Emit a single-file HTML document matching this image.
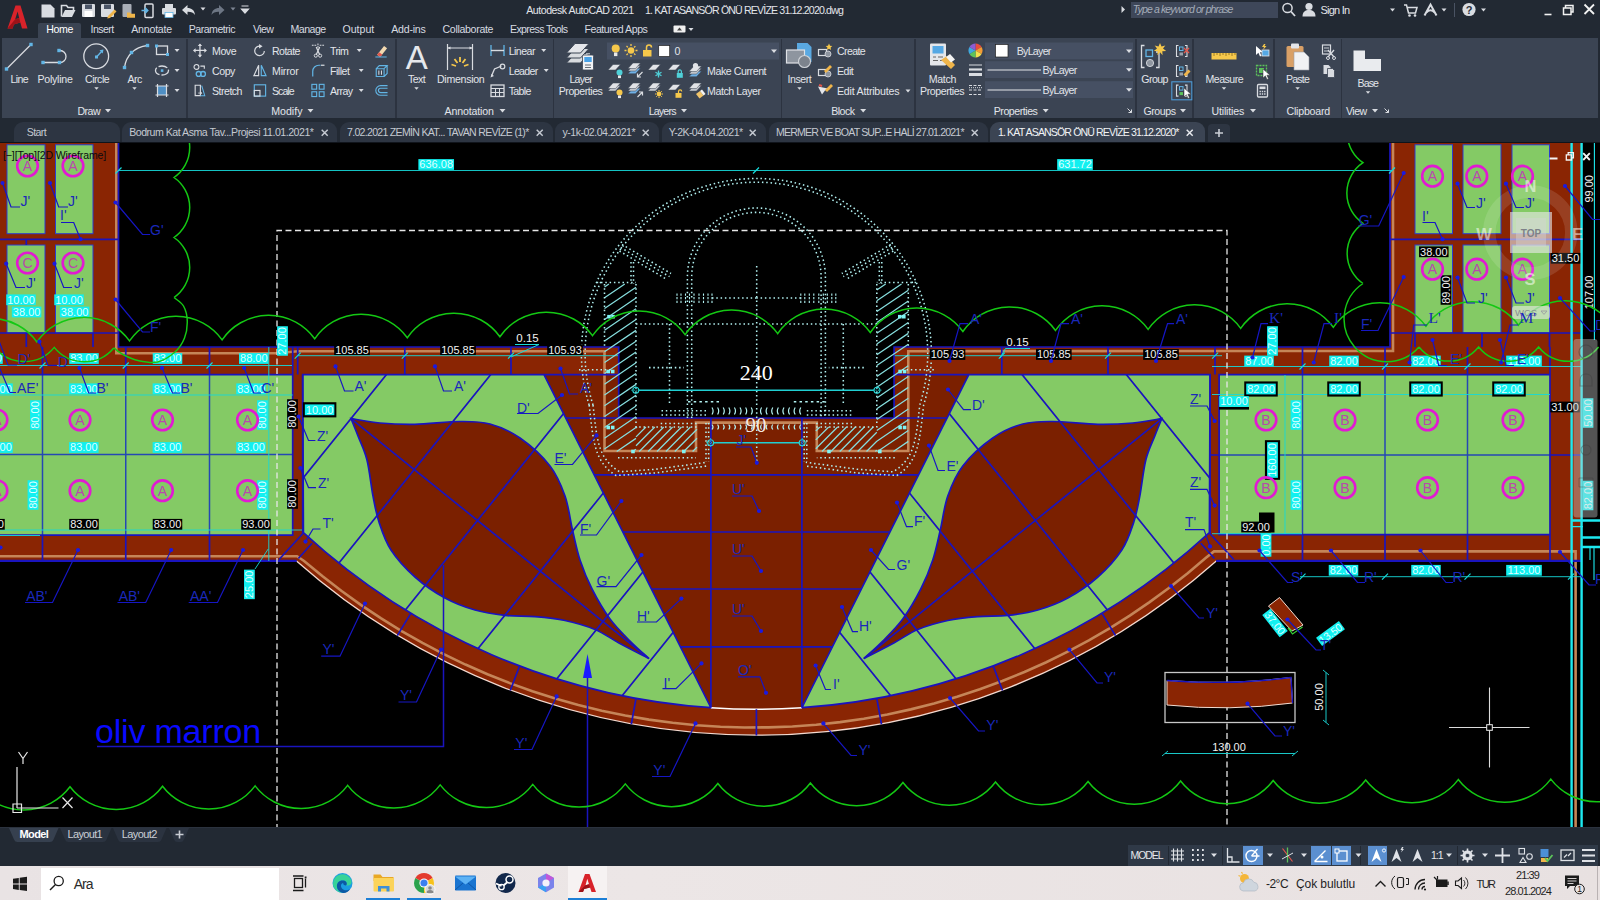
<!DOCTYPE html>
<html lang="tr"><head><meta charset="utf-8"><title>Autodesk AutoCAD 2021</title>
<style>
html,body{margin:0;padding:0;background:#000;}
body{width:1600px;height:900px;overflow:hidden;position:relative;font-family:"Liberation Sans",sans-serif;}
#app{position:absolute;left:0;top:0;width:1600px;height:900px;overflow:hidden;background:#222933;}
.abs{position:absolute;}
svg text{font-family:"Liberation Sans",sans-serif;}

.t{position:absolute;white-space:nowrap;line-height:16px;height:16px;font-family:"Liberation Sans",sans-serif;}
.r{position:absolute;}
.ico{position:absolute;overflow:visible;}
</style></head>
<body><div id="app">
<svg width="1600" height="900" viewBox="0 0 1600 900" style="position:absolute;left:0;top:0">
<defs><clipPath id="vp"><rect x="0" y="143" width="1600" height="684"/></clipPath></defs>
<rect x="0" y="143" width="1600" height="684" fill="#000"/>
<g clip-path="url(#vp)">
<path d="M0,347 L618.7,347 L618.7,418 L894.1,418 L894.1,347 L1581.5,347 L1581.5,561 L1216.3,561 A694.5,694.5 0 0 1 296.5,561 L0,561 Z" fill="#8a2503"/>
<rect x="0" y="143" width="118" height="206" fill="#8a2503"/>
<rect x="1390" y="143" width="191.5" height="206" fill="#8a2503"/>
<path d="M544,374.6 L618.7,374.6 L618.7,418 L894.1,418 L894.1,374.6 L968.8,374.6 L801.9,707.7 A668.7,668.7 0 0 1 710.9,707.7 Z" fill="#7b2000"/>
<defs><clipPath id="cgl"><path d="M302.7,374.6 L544,374.6 L710.9,707.7 A668.7,668.7 0 0 1 303.4,532.6 Z"/></clipPath><clipPath id="cgr"><path d="M1210.1,374.6 L968.8,374.6 L801.9,707.7 A668.7,668.7 0 0 0 1209.4,532.6 Z"/></clipPath></defs>
<path d="M302.7,374.6 L544,374.6 L710.9,707.7 A668.7,668.7 0 0 1 303.4,532.6 Z" fill="#84ca65" stroke="#1a14be" stroke-width="1.7"/>
<path d="M1210.1,374.6 L968.8,374.6 L801.9,707.7 A668.7,668.7 0 0 0 1209.4,532.6 Z" fill="#84ca65" stroke="#1a14be" stroke-width="1.7"/>
<path d="M351,418.6 C355.83,419.33 369.33,422.05 380,423 C390.67,423.95 401.67,424.55 415,424.3 C428.33,424.05 447.5,421.55 460,421.5 C472.5,421.45 480,421.25 490,424 C500,426.75 510,431 520,438 C530,445 542.5,456.33 550,466 C557.5,475.67 561.25,485.33 565,496 C568.75,506.67 570,519.33 572.5,530 C575,540.67 576.75,550.17 580,560 C583.25,569.83 587,579.17 592,589 C597,598.83 603.67,610.33 610,619 C616.33,627.67 623.5,634.4 630,641 C636.5,647.6 645.83,655.67 649,658.6 L649,658.6 C644,656 628,647.85 619,643 C610,638.15 604,633.25 595,629.5 C586,625.75 575,622.65 565,620.5 C555,618.35 545,617.45 535,616.6 C525,615.75 515,616.5 505,615.4 C495,614.3 485,612.9 475,610 C465,607.1 455,603.5 445,598 C435,592.5 424,585 415,577 C406,569 397,559.17 391,550 C385,540.83 382,531 379,522 C376,513 375,506.33 373,496 C371,485.67 369.5,470 367,460 C364.5,450 360.67,442.9 358,436 C355.33,429.1 352.17,421.5 351,418.6 Z" fill="#7b2000" stroke="#1a14be" stroke-width="1.7"/>
<g transform="translate(1512.8,0) scale(-1,1)"><path d="M351,418.6 C355.83,419.33 369.33,422.05 380,423 C390.67,423.95 401.67,424.55 415,424.3 C428.33,424.05 447.5,421.55 460,421.5 C472.5,421.45 480,421.25 490,424 C500,426.75 510,431 520,438 C530,445 542.5,456.33 550,466 C557.5,475.67 561.25,485.33 565,496 C568.75,506.67 570,519.33 572.5,530 C575,540.67 576.75,550.17 580,560 C583.25,569.83 587,579.17 592,589 C597,598.83 603.67,610.33 610,619 C616.33,627.67 623.5,634.4 630,641 C636.5,647.6 645.83,655.67 649,658.6 L649,658.6 C644,656 628,647.85 619,643 C610,638.15 604,633.25 595,629.5 C586,625.75 575,622.65 565,620.5 C555,618.35 545,617.45 535,616.6 C525,615.75 515,616.5 505,615.4 C495,614.3 485,612.9 475,610 C465,607.1 455,603.5 445,598 C435,592.5 424,585 415,577 C406,569 397,559.17 391,550 C385,540.83 382,531 379,522 C376,513 375,506.33 373,496 C371,485.67 369.5,470 367,460 C364.5,450 360.67,442.9 358,436 C355.33,429.1 352.17,421.5 351,418.6 Z" fill="#7b2000" stroke="#1a14be" stroke-width="1.7"/></g>
<path clip-path="url(#cgl)" d="M601.9,107.07 L100.1,730.13 M665.14,158 L163.34,781.06 M728.38,208.93 L226.58,831.99 M791.31,259.62 L289.51,882.68 M853.85,309.98 L352.05,933.04 M901.74,348.56 L399.95,971.62 M351,418.6 L649,658.6" fill="none" stroke="#1a14be" stroke-width="1.7"/>
<g transform="translate(1512.8,0) scale(-1,1)"><path clip-path="url(#cgl)" d="M601.9,107.07 L100.1,730.13 M665.14,158 L163.34,781.06 M728.38,208.93 L226.58,831.99 M791.31,259.62 L289.51,882.68 M853.85,309.98 L352.05,933.04 M901.74,348.56 L399.95,971.62 M351,418.6 L649,658.6" fill="none" stroke="#1a14be" stroke-width="1.7"/></g>
<rect x="0" y="374.6" width="292.7" height="160.6" fill="#84ca65"/>
<rect x="1220" y="374.6" width="330" height="160" fill="#84ca65"/>
<rect x="7" y="144.8" width="38" height="88.9" fill="#84ca65" stroke="#2a3cd0" stroke-width="1"/>
<rect x="7" y="245" width="38" height="88" fill="#84ca65" stroke="#2a3cd0" stroke-width="1"/>
<rect x="55.5" y="144.8" width="37.5" height="88.9" fill="#84ca65" stroke="#2a3cd0" stroke-width="1"/>
<rect x="55.5" y="245" width="37.5" height="88" fill="#84ca65" stroke="#2a3cd0" stroke-width="1"/>
<rect x="1415" y="144.8" width="37.5" height="88.9" fill="#84ca65" stroke="#2a3cd0" stroke-width="1"/>
<rect x="1415" y="245" width="37.5" height="88" fill="#84ca65" stroke="#2a3cd0" stroke-width="1"/>
<rect x="1463" y="144.8" width="38" height="88.9" fill="#84ca65" stroke="#2a3cd0" stroke-width="1"/>
<rect x="1463" y="245" width="38" height="88" fill="#84ca65" stroke="#2a3cd0" stroke-width="1"/>
<rect x="1512" y="144.8" width="37.5" height="88.9" fill="#84ca65" stroke="#2a3cd0" stroke-width="1"/>
<rect x="1512" y="245" width="37.5" height="88" fill="#84ca65" stroke="#2a3cd0" stroke-width="1"/>
<path d="M116.3,140 L116.3,353.2 L276,353.2 L298,351.2 L604.5,351.2 L604.5,451 L696,451 L696,422.6 L816.8,422.6 L816.8,451 L908.3,451 L908.3,351.2 L1393,350.9 L1393,140 M0,556.2 L297,556.2 L304.07,560.95 L322.58,576.32 L341.62,591.03 L361.15,605.07 L381.16,618.42 L401.62,631.05 L422.5,642.97 L443.79,654.14 L465.44,664.56 L487.44,674.22 L509.77,683.1 L532.38,691.2 L555.26,698.5 L578.37,705 L601.7,710.69 L625.2,715.56 L648.86,719.6 L672.63,722.82 L696.51,725.2 L720.44,726.75 L744.41,727.46 L768.39,727.35 L792.34,726.44 L816.25,724.68 L840.08,722.1 L863.8,718.68 L887.38,714.44 L910.8,709.38 L934.02,703.5 L957.03,696.82 L979.78,689.34 L1002.25,681.07 L1024.43,672.03 L1046.26,662.21 L1067.74,651.65 L1088.84,640.34 L1109.53,628.3 L1129.78,615.55 L1149.57,602.1 L1168.87,587.97 L1187.67,573.18 L1205.95,557.74 L1214,551.4 L1575.6,551.4 L1575.6,830" fill="none" stroke="#c58558" stroke-width="2.6" stroke-linejoin="miter"/>
<path d="M296.5,561 A694.5,694.5 0 0 0 1216.3,561" fill="none" stroke="#f3d9cf" stroke-width="1.3"/>
<path d="M710.9,707.7 A668.7,668.7 0 0 0 801.9,707.7" fill="none" stroke="#fff" stroke-width="1.6"/>
<path d="M42.5,374.6 L42.5,535.2 M125.75,374.6 L125.75,535.2 M209.5,374.6 L209.5,535.2 M0,454.5 L292.7,454.5 M1302.5,374.6 L1302.5,534.7 M1385,374.6 L1385,534.7 M1467.5,374.6 L1467.5,534.7 M1219.1,455 L1550,455" fill="none" stroke="#2448b4" stroke-width="1.5"/>
<path d="M118.5,140 L118.5,347 L618.7,347 L618.7,418 L894.1,418 L894.1,347 L1390,347 L1390,140 M0,560.8 L296.5,560.8 M1216.3,560.8 L1581,560.8 L1581,546 M0,374.6 L292.7,374.6 L292.7,535.2 L0,535.2 M302.7,374.6 L302.7,533 M1219.1,374.6 L1550,374.6 L1550,534.7 L1219.1,534.7 Z M1210.1,374.6 L1210.1,533 M292.7,347 L292.7,374.6 M297.7,347 L297.7,374.6 M1215,347 L1215,374.6 M42.5,347 L42.5,374.6 M42.5,535.2 L42.5,561 M125.75,347 L125.75,374.6 M125.75,535.2 L125.75,561 M209.5,347 L209.5,374.6 M209.5,535.2 L209.5,561 M1302.5,347 L1302.5,374.6 M1302.5,534.7 L1302.5,561 M1385,347 L1385,374.6 M1385,534.7 L1385,561 M1467.5,347 L1467.5,374.6 M1467.5,534.7 L1467.5,561 M1209.8,455 L1219.1,455 M1550,455 L1581,455 M1550,347 L1550,561 M404.8,347 L404.8,374.6 M1108,347 L1108,374.6 M511,347 L511,374.6 M1001.8,347 L1001.8,374.6 M544,374.6 L618.7,374.6 M968.8,374.6 L894.1,374.6 M710.9,418 L710.9,707.7 M801.9,418 L801.9,707.7 M565.75,418 L947.05,418 M594.21,474.8 L918.59,474.8 M622.87,532 L889.93,532 M651.43,589 L861.37,589 M680.39,646.8 L832.41,646.8 M410.89,613.13 L397.31,635.64 M519.59,665.97 L510.28,690.56 M636.03,698.38 L631.3,724.25 M756.4,709.3 L756.4,735.6 M876.77,698.38 L881.5,724.25 M993.21,665.97 L1002.52,690.56 M1101.91,613.13 L1115.49,635.64 M303.4,533 L279,559.5 M312,543.3 L298.4,558.5 M1209.4,533 L1233.8,559.5 M1200.8,543.3 L1214.4,558.5 M0,239.3 L118.5,239.3 M26.3,239.3 L26.3,245 M26.3,333 L26.3,347 M93,333 L93,347 M0,333 L118,333 M1390,239.3 L1581,239.3 M1390,333 L1581,333 M1482,333 L1482,347 M1415,333 L1415,347 M1549.5,333 L1549.5,347" fill="none" stroke="#1a14be" stroke-width="1.7"/>
<path d="M0,560.8 L296.5,560.8 M1216.3,560.8 L1581,560.8" fill="none" stroke="#1a14be" stroke-width="2.2"/>
<path d="M118.5,170.5 L1392,170.5 M0,395 L292.7,395 M0,530 L302,530 M268.8,347 L268.8,561 M0,365.5 L292,365.5 M1212,394.5 L1550,394.5 M1212,533.7 L1302,533.7 M1285,375 L1285,534 M1212,366.5 L1581,366.5 M297.7,355.7 L618,355.7 M894.8,355.7 L1222,355.7 M1300,576.7 L1581,576.7 M0,535.5 L40,535.5 M268.2,549 L255,569" fill="none" stroke="#16d8d8" stroke-width="1" opacity="0.9"/>
<path d="M115.5,173.5 L121.5,167.5 M753,173.5 L759,167.5 M1389,173.5 L1395,167.5 M294.7,358.7 L300.7,352.7 M401.8,358.7 L407.8,352.7 M508,358.7 L514,352.7 M1105,358.7 L1111,352.7 M998.8,358.7 L1004.8,352.7 M1212.1,358.7 L1218.1,352.7 M39.5,368.5 L45.5,362.5 M122.7,368.5 L128.7,362.5 M206.5,368.5 L212.5,362.5 M1299.5,369.5 L1305.5,363.5 M1382,369.5 L1388,363.5 M1464.5,369.5 L1470.5,363.5 M1299.5,579.7 L1305.5,573.7 M1382,579.7 L1388,573.7 M1464.5,579.7 L1470.5,573.7 M1568,579.7 L1574,573.7" fill="none" stroke="#16d8d8" stroke-width="1.2"/>
<path d="M1571.6,140 L1571.6,830 M1581.6,140 L1581.6,830" fill="none" stroke="#1de9f0" stroke-width="2.4"/>
<path d="M1594.4,140 L1594.4,340" fill="none" stroke="#1de9f0" stroke-width="1.1"/>
<path d="M1571,520.5 L1600,520.5 M1581,537.5 L1600,537.5 M1581,547 L1600,547" fill="none" stroke="#1de9f0" stroke-width="2.4"/>
<path d="M1571,526.6 L1583,526.6 M1590,547 L1590,560 M1594,547 L1594,580" fill="none" stroke="#1de9f0" stroke-width="1.1"/>
<path d="M277,830 L277,230.5 L1227,230.5 L1227,830" fill="none" stroke="#e6e6e6" stroke-width="1.3" stroke-dasharray="6 3.5"/>
<path d="M97,746.5 L443.5,746.5 L443.5,565" fill="none" stroke="#1a14be" stroke-width="1.5"/>
<path d="M587.5,830 L587.5,676" fill="none" stroke="#1a14be" stroke-width="1.5"/>
<path d="M587.5,654 L592,678 L583,678 Z" fill="#1a1aff"/>
<path d="M604.5,287 L608.91,284 M604.5,297.8 L624.79,284 M604.5,308.6 L636,287.18 M604.5,319.4 L636,297.98 M604.5,330.2 L636,308.78 M604.5,341 L636,319.58 M604.5,351.8 L636,330.38 M604.5,362.6 L636,341.18 M604.5,373.4 L636,351.98 M604.5,384.2 L636,362.78 M604.5,395 L636,373.58 M604.5,405.8 L636,384.38 M604.5,416.6 L636,395.18 M604.5,427.4 L636,405.98 M604.5,438.2 L636,416.78 M604.5,449 L636,427.58 M616.71,451.5 L636,438.38 M632.59,451.5 L636,449.18 M636,428 L637,427 M636,436.9 L645.9,427 M636,445.8 L654.8,427 M639.2,451.5 L663.7,427 M648.1,451.5 L672.6,427 M657,451.5 L681.5,427 M665.9,451.5 L690.4,427 M674.8,451.5 L697,429.3 M683.7,451.5 L697,438.2 M692.6,451.5 L697,447.1 M876.8,290 L885.62,284 M876.8,300.8 L901.51,284 M876.8,311.6 L908.3,290.18 M876.8,322.4 L908.3,300.98 M876.8,333.2 L908.3,311.78 M876.8,344 L908.3,322.58 M876.8,354.8 L908.3,333.38 M876.8,365.6 L908.3,344.18 M876.8,376.4 L908.3,354.98 M876.8,387.2 L908.3,365.78 M876.8,398 L908.3,376.58 M876.8,408.8 L908.3,387.38 M876.8,419.6 L908.3,398.18 M876.8,430.4 L908.3,408.98 M876.8,441.2 L908.3,419.78 M877.54,451.5 L908.3,430.58 M893.42,451.5 L908.3,441.38 M815.8,431 L819.8,427 M815.8,439.9 L828.7,427 M815.8,448.8 L837.6,427 M822,451.5 L846.5,427 M830.9,451.5 L855.4,427 M839.8,451.5 L864.3,427 M848.7,451.5 L873.2,427 M857.6,451.5 L876.8,432.3 M866.5,451.5 L876.8,441.2 M875.4,451.5 L876.8,450.1" fill="none" stroke="#86dede" stroke-width="1.25"/>
<g><path d="M636,284 L636,427 L697,427 M596.7,282.4 L636,282.4 M604.5,284 L604.5,347 M636,324 L756.4,324 M669.5,324 L669.5,404 M649,367.6 L684,367.6 M661.5,410.7 L707,410.7 M661.5,415 L707,415 M660.7,423.5 L697,423.5 M706,423 L706,462 M708.6,423 L708.6,462 M579,369.8 L611,369.8 M618,457.8 L696,457.8 M712,298 L756.4,298 M620.7,247.5 L669.5,276.7 M619.5,251 L667,279.6 M622,244.5 L671,273.5 M631,262 L631,284 M633.5,262 L633.5,284" fill="none" stroke="#b2f2f2" stroke-width="1.55" stroke-dasharray="1.5 2.8"/>
<path d="M677,293.5 L677,303 M681,293.5 L681,303 M685.5,293.5 L685.5,303 M689.5,293.5 L689.5,303 M694,293.5 L694,303 M699,293.5 L699,303 M703.5,293.5 L703.5,303 M708,293.5 L708,303 M712,293.5 L712,303" fill="none" stroke="#b2f2f2" stroke-width="1.1" stroke-dasharray="2.2 1.4"/>
<path d="M712,407.5 q2.2,3.5 0,7 M712,424.5 q2,2.5 0,5 M717.6,407.5 q2.2,3.5 0,7 M717.6,424.5 q2,2.5 0,5 M723.2,407.5 q2.2,3.5 0,7 M723.2,424.5 q2,2.5 0,5 M728.8,407.5 q2.2,3.5 0,7 M728.8,424.5 q2,2.5 0,5 M734.4,407.5 q2.2,3.5 0,7 M734.4,424.5 q2,2.5 0,5 M740,407.5 q2.2,3.5 0,7 M740,424.5 q2,2.5 0,5 M745.6,407.5 q2.2,3.5 0,7 M745.6,424.5 q2,2.5 0,5 M751.2,407.5 q2.2,3.5 0,7 M751.2,424.5 q2,2.5 0,5" fill="none" stroke="#b2f2f2" stroke-width="1.2"/>
<path d="M688,401.8 L722,401.8" fill="none" stroke="#b2f2f2" stroke-width="1.4" stroke-dasharray="2.5 3.2"/>
<rect x="606.4" y="369.7" width="3.6" height="3.6" fill="#7ff4f4"/>
<rect x="610.9" y="369.7" width="3.6" height="3.6" fill="#7ff4f4"/>
<rect x="606.4" y="425.7" width="3.6" height="3.6" fill="#7ff4f4"/>
<rect x="610.9" y="425.7" width="3.6" height="3.6" fill="#7ff4f4"/>
<rect x="631.2" y="449.7" width="3.6" height="3.6" fill="#7ff4f4"/>
<rect x="682" y="449.7" width="3.6" height="3.6" fill="#7ff4f4"/>
<rect x="607.2" y="314.9" width="3.6" height="3.6" fill="#7ff4f4"/>
<rect x="611.2" y="314.9" width="3.6" height="3.6" fill="#7ff4f4"/>
<circle cx="635.8" cy="390.2" r="3" fill="none" stroke="#27d6d6" stroke-width="1.1"/>
<path d="M631.3,390.2 h9 M635.8,385.7 v9" stroke="#27d6d6" stroke-width="0.9" stroke-dasharray="1 1.5" fill="none"/>
<circle cx="710.6" cy="442.7" r="3" fill="none" stroke="#27d6d6" stroke-width="1.1"/>
<path d="M706.1,442.7 h9 M710.6,438.2 v9" stroke="#27d6d6" stroke-width="0.9" stroke-dasharray="1 1.5" fill="none"/></g>
<g transform="translate(1512.8,0) scale(-1,1)"><path d="M636,284 L636,427 L697,427 M596.7,282.4 L636,282.4 M604.5,284 L604.5,347 M636,324 L756.4,324 M669.5,324 L669.5,404 M649,367.6 L684,367.6 M661.5,410.7 L707,410.7 M661.5,415 L707,415 M660.7,423.5 L697,423.5 M706,423 L706,462 M708.6,423 L708.6,462 M579,369.8 L611,369.8 M618,457.8 L696,457.8 M712,298 L756.4,298 M620.7,247.5 L669.5,276.7 M619.5,251 L667,279.6 M622,244.5 L671,273.5 M631,262 L631,284 M633.5,262 L633.5,284" fill="none" stroke="#b2f2f2" stroke-width="1.55" stroke-dasharray="1.5 2.8"/>
<path d="M677,293.5 L677,303 M681,293.5 L681,303 M685.5,293.5 L685.5,303 M689.5,293.5 L689.5,303 M694,293.5 L694,303 M699,293.5 L699,303 M703.5,293.5 L703.5,303 M708,293.5 L708,303 M712,293.5 L712,303" fill="none" stroke="#b2f2f2" stroke-width="1.1" stroke-dasharray="2.2 1.4"/>
<path d="M712,407.5 q2.2,3.5 0,7 M712,424.5 q2,2.5 0,5 M717.6,407.5 q2.2,3.5 0,7 M717.6,424.5 q2,2.5 0,5 M723.2,407.5 q2.2,3.5 0,7 M723.2,424.5 q2,2.5 0,5 M728.8,407.5 q2.2,3.5 0,7 M728.8,424.5 q2,2.5 0,5 M734.4,407.5 q2.2,3.5 0,7 M734.4,424.5 q2,2.5 0,5 M740,407.5 q2.2,3.5 0,7 M740,424.5 q2,2.5 0,5 M745.6,407.5 q2.2,3.5 0,7 M745.6,424.5 q2,2.5 0,5 M751.2,407.5 q2.2,3.5 0,7 M751.2,424.5 q2,2.5 0,5" fill="none" stroke="#b2f2f2" stroke-width="1.2"/>
<path d="M688,401.8 L722,401.8" fill="none" stroke="#b2f2f2" stroke-width="1.4" stroke-dasharray="2.5 3.2"/>
<rect x="606.4" y="369.7" width="3.6" height="3.6" fill="#7ff4f4"/>
<rect x="610.9" y="369.7" width="3.6" height="3.6" fill="#7ff4f4"/>
<rect x="606.4" y="425.7" width="3.6" height="3.6" fill="#7ff4f4"/>
<rect x="610.9" y="425.7" width="3.6" height="3.6" fill="#7ff4f4"/>
<rect x="631.2" y="449.7" width="3.6" height="3.6" fill="#7ff4f4"/>
<rect x="682" y="449.7" width="3.6" height="3.6" fill="#7ff4f4"/>
<rect x="607.2" y="314.9" width="3.6" height="3.6" fill="#7ff4f4"/>
<rect x="611.2" y="314.9" width="3.6" height="3.6" fill="#7ff4f4"/>
<circle cx="635.8" cy="390.2" r="3" fill="none" stroke="#27d6d6" stroke-width="1.1"/>
<path d="M631.3,390.2 h9 M635.8,385.7 v9" stroke="#27d6d6" stroke-width="0.9" stroke-dasharray="1 1.5" fill="none"/>
<circle cx="710.6" cy="442.7" r="3" fill="none" stroke="#27d6d6" stroke-width="1.1"/>
<path d="M706.1,442.7 h9 M710.6,438.2 v9" stroke="#27d6d6" stroke-width="0.9" stroke-dasharray="1 1.5" fill="none"/></g>
<path d="M589.15,405 A175,175 0 1 1 923.65,405 C919.65,440 918.8,462 896.8,475.5 L857.8,473 L805.8,466 M589.15,405 C593.15,440 594,462 616,475.5 L655,473 L707,466 M593.02,405 A171.3,171.3 0 1 1 919.78,405 C915.78,440 915.1,458.3 893.1,471.8 L857.8,469.3 L805.8,462.3 M593.02,405 C597.02,440 597.7,458.3 619.7,471.8 L655,469.3 L707,462.3 M687.4,418 L687.4,277 A69,69 0 0 1 825.4,277 L825.4,418 M691.7,418 L691.7,277 A64.7,64.7 0 0 1 821.1,277 L821.1,418 M756.7,266 L756.7,462" fill="none" stroke="#b2f2f2" stroke-width="1.55" stroke-dasharray="1.5 2.8"/>
<path d="M639,390.2 L873.8,390.2 M713.6,442.7 L799.2,442.7" fill="none" stroke="#20cfd2" stroke-width="1.5"/>
<text x="756.2" y="379.8" font-size="22" text-anchor="middle" fill="#fff" style="font-family:'Liberation Serif',serif">240</text>
<text x="756" y="432.2" font-size="21" text-anchor="middle" fill="#f4e9e4" style="font-family:'Liberation Serif',serif">90</text>
<g transform="translate(436.2,164.5)"><rect x="-17.82" y="-5.39" width="35.64" height="10.78" fill="#12f0f0"/><text x="0" y="3.96" font-size="11" text-anchor="middle" fill="#dfffff">636.08</text></g>
<g transform="translate(1075,164.5)"><rect x="-17.82" y="-5.39" width="35.64" height="10.78" fill="#12f0f0"/><text x="0" y="3.96" font-size="11" text-anchor="middle" fill="#dfffff">631.72</text></g>
<g transform="translate(21,299.8)"><rect x="-14.76" y="-5.39" width="29.52" height="10.78" fill="#12f0f0"/><text x="0" y="3.96" font-size="11" text-anchor="middle" fill="#dfffff">10.00</text></g>
<g transform="translate(26.6,312)"><rect x="-14.76" y="-5.39" width="29.52" height="10.78" fill="#12f0f0"/><text x="0" y="3.96" font-size="11" text-anchor="middle" fill="#dfffff">38.00</text></g>
<g transform="translate(69,299.8)"><rect x="-14.76" y="-5.39" width="29.52" height="10.78" fill="#12f0f0"/><text x="0" y="3.96" font-size="11" text-anchor="middle" fill="#dfffff">10.00</text></g>
<g transform="translate(74.6,312)"><rect x="-14.76" y="-5.39" width="29.52" height="10.78" fill="#12f0f0"/><text x="0" y="3.96" font-size="11" text-anchor="middle" fill="#dfffff">38.00</text></g>
<g transform="translate(-12,358.5)"><rect x="-14.76" y="-5.39" width="29.52" height="10.78" fill="#12f0f0"/><text x="0" y="3.96" font-size="11" text-anchor="middle" fill="#dfffff">83.00</text></g>
<g transform="translate(84,358.5)"><rect x="-14.76" y="-5.39" width="29.52" height="10.78" fill="#12f0f0"/><text x="0" y="3.96" font-size="11" text-anchor="middle" fill="#dfffff">83.00</text></g>
<g transform="translate(167.5,358.5)"><rect x="-14.76" y="-5.39" width="29.52" height="10.78" fill="#12f0f0"/><text x="0" y="3.96" font-size="11" text-anchor="middle" fill="#dfffff">83.00</text></g>
<g transform="translate(253.8,358.5)"><rect x="-14.76" y="-5.39" width="29.52" height="10.78" fill="#12f0f0"/><text x="0" y="3.96" font-size="11" text-anchor="middle" fill="#dfffff">88.00</text></g>
<g transform="translate(-2,388.8)"><rect x="-14.76" y="-5.39" width="29.52" height="10.78" fill="#12f0f0"/><text x="0" y="3.96" font-size="11" text-anchor="middle" fill="#dfffff">83.00</text></g>
<g transform="translate(83.8,388.8)"><rect x="-14.76" y="-5.39" width="29.52" height="10.78" fill="#12f0f0"/><text x="0" y="3.96" font-size="11" text-anchor="middle" fill="#dfffff">83.00</text></g>
<g transform="translate(167.4,388.8)"><rect x="-14.76" y="-5.39" width="29.52" height="10.78" fill="#12f0f0"/><text x="0" y="3.96" font-size="11" text-anchor="middle" fill="#dfffff">83.00</text></g>
<g transform="translate(251,388.8)"><rect x="-14.76" y="-5.39" width="29.52" height="10.78" fill="#12f0f0"/><text x="0" y="3.96" font-size="11" text-anchor="middle" fill="#dfffff">83.00</text></g>
<g transform="translate(-2,447.5)"><rect x="-14.76" y="-5.39" width="29.52" height="10.78" fill="#12f0f0"/><text x="0" y="3.96" font-size="11" text-anchor="middle" fill="#dfffff">83.00</text></g>
<g transform="translate(83.8,447.5)"><rect x="-14.76" y="-5.39" width="29.52" height="10.78" fill="#12f0f0"/><text x="0" y="3.96" font-size="11" text-anchor="middle" fill="#dfffff">83.00</text></g>
<g transform="translate(167.4,447.5)"><rect x="-14.76" y="-5.39" width="29.52" height="10.78" fill="#12f0f0"/><text x="0" y="3.96" font-size="11" text-anchor="middle" fill="#dfffff">83.00</text></g>
<g transform="translate(251,447.5)"><rect x="-14.76" y="-5.39" width="29.52" height="10.78" fill="#12f0f0"/><text x="0" y="3.96" font-size="11" text-anchor="middle" fill="#dfffff">83.00</text></g>
<g transform="translate(35.5,415) rotate(-90)"><rect x="-14.76" y="-5.39" width="29.52" height="10.78" fill="#12f0f0"/><text x="0" y="3.96" font-size="11" text-anchor="middle" fill="#dfffff">80.00</text></g>
<g transform="translate(33,495) rotate(-90)"><rect x="-14.76" y="-5.39" width="29.52" height="10.78" fill="#12f0f0"/><text x="0" y="3.96" font-size="11" text-anchor="middle" fill="#dfffff">80.00</text></g>
<g transform="translate(262.5,415) rotate(-90)"><rect x="-14.76" y="-5.39" width="29.52" height="10.78" fill="#12f0f0"/><text x="0" y="3.96" font-size="11" text-anchor="middle" fill="#dfffff">80.00</text></g>
<g transform="translate(262.5,495) rotate(-90)"><rect x="-14.76" y="-5.39" width="29.52" height="10.78" fill="#12f0f0"/><text x="0" y="3.96" font-size="11" text-anchor="middle" fill="#dfffff">80.00</text></g>
<g transform="translate(282.5,341) rotate(-90)"><rect x="-14.76" y="-5.39" width="29.52" height="10.78" fill="#12f0f0"/><text x="0" y="3.96" font-size="11" text-anchor="middle" fill="#dfffff">27.00</text></g>
<g transform="translate(1272.5,341) rotate(-90)"><rect x="-14.76" y="-5.39" width="29.52" height="10.78" fill="#12f0f0"/><text x="0" y="3.96" font-size="11" text-anchor="middle" fill="#dfffff">27.00</text></g>
<g transform="translate(249.4,584.4) rotate(-90)"><rect x="-14.76" y="-5.39" width="29.52" height="10.78" fill="#12f0f0"/><text x="0" y="3.96" font-size="11" text-anchor="middle" fill="#dfffff">25.00</text></g>
<g transform="translate(319.6,409.8)"><rect x="-16.76" y="-7.59" width="33.52" height="15.18" fill="#000"/><rect x="-14.76" y="-5.39" width="29.52" height="10.78" fill="#12f0f0"/><text x="0" y="3.96" font-size="11" text-anchor="middle" fill="#dfffff">10.00</text></g>
<g transform="translate(1259,361)"><rect x="-14.76" y="-5.39" width="29.52" height="10.78" fill="#12f0f0"/><text x="0" y="3.96" font-size="11" text-anchor="middle" fill="#dfffff">87.00</text></g>
<g transform="translate(1344,361)"><rect x="-14.76" y="-5.39" width="29.52" height="10.78" fill="#12f0f0"/><text x="0" y="3.96" font-size="11" text-anchor="middle" fill="#dfffff">82.00</text></g>
<g transform="translate(1426,361)"><rect x="-14.76" y="-5.39" width="29.52" height="10.78" fill="#12f0f0"/><text x="0" y="3.96" font-size="11" text-anchor="middle" fill="#dfffff">82.00</text></g>
<g transform="translate(1524,361)"><rect x="-17.82" y="-5.39" width="35.64" height="10.78" fill="#12f0f0"/><text x="0" y="3.96" font-size="11" text-anchor="middle" fill="#dfffff">113.00</text></g>
<g transform="translate(1261,389)"><rect x="-16.76" y="-7.59" width="33.52" height="15.18" fill="#000"/><rect x="-14.76" y="-5.39" width="29.52" height="10.78" fill="#12f0f0"/><text x="0" y="3.96" font-size="11" text-anchor="middle" fill="#dfffff">82.00</text></g>
<g transform="translate(1344,389)"><rect x="-16.76" y="-7.59" width="33.52" height="15.18" fill="#000"/><rect x="-14.76" y="-5.39" width="29.52" height="10.78" fill="#12f0f0"/><text x="0" y="3.96" font-size="11" text-anchor="middle" fill="#dfffff">82.00</text></g>
<g transform="translate(1426,389)"><rect x="-16.76" y="-7.59" width="33.52" height="15.18" fill="#000"/><rect x="-14.76" y="-5.39" width="29.52" height="10.78" fill="#12f0f0"/><text x="0" y="3.96" font-size="11" text-anchor="middle" fill="#dfffff">82.00</text></g>
<g transform="translate(1509,389)"><rect x="-16.76" y="-7.59" width="33.52" height="15.18" fill="#000"/><rect x="-14.76" y="-5.39" width="29.52" height="10.78" fill="#12f0f0"/><text x="0" y="3.96" font-size="11" text-anchor="middle" fill="#dfffff">82.00</text></g>
<rect x="1219" y="407" width="30" height="2.6" fill="#000"/>
<g transform="translate(1234,401.5)"><rect x="-14.76" y="-5.39" width="29.52" height="10.78" fill="#12f0f0"/><text x="0" y="3.96" font-size="11" text-anchor="middle" fill="#dfffff">10.00</text></g>
<g transform="translate(1272.5,460) rotate(-90)"><rect x="-19.82" y="-7.59" width="39.64" height="15.18" fill="#000"/><rect x="-17.82" y="-5.39" width="35.64" height="10.78" fill="#12f0f0"/><text x="0" y="3.96" font-size="11" text-anchor="middle" fill="#dfffff">160.00</text></g>
<g transform="translate(1296,415) rotate(-90)"><rect x="-14.76" y="-5.39" width="29.52" height="10.78" fill="#12f0f0"/><text x="0" y="3.96" font-size="11" text-anchor="middle" fill="#dfffff">80.00</text></g>
<g transform="translate(1296,495) rotate(-90)"><rect x="-14.76" y="-5.39" width="29.52" height="10.78" fill="#12f0f0"/><text x="0" y="3.96" font-size="11" text-anchor="middle" fill="#dfffff">80.00</text></g>
<g transform="translate(1266,545) rotate(-90)"><rect x="-11.7" y="-5.39" width="23.41" height="10.78" fill="#12f0f0"/><text x="0" y="3.96" font-size="11" text-anchor="middle" fill="#dfffff">0.00</text></g>
<g transform="translate(1343.5,570.3)"><rect x="-14.76" y="-5.39" width="29.52" height="10.78" fill="#12f0f0"/><text x="0" y="3.96" font-size="11" text-anchor="middle" fill="#dfffff">82.00</text></g>
<g transform="translate(1426,570.3)"><rect x="-14.76" y="-5.39" width="29.52" height="10.78" fill="#12f0f0"/><text x="0" y="3.96" font-size="11" text-anchor="middle" fill="#dfffff">82.00</text></g>
<g transform="translate(1524,570.3)"><rect x="-17.82" y="-5.39" width="35.64" height="10.78" fill="#12f0f0"/><text x="0" y="3.96" font-size="11" text-anchor="middle" fill="#dfffff">113.00</text></g>
<g transform="translate(1275,623) rotate(52)"><rect x="-14.14" y="-5.14" width="28.27" height="10.29" fill="#12f0f0"/><text x="0" y="3.78" font-size="10.5" text-anchor="middle" fill="#dfffff">37.00</text></g>
<g transform="translate(1330.5,633.5) rotate(-36)"><rect x="-14.14" y="-5.14" width="28.27" height="10.29" fill="#12f0f0"/><text x="0" y="3.78" font-size="10.5" text-anchor="middle" fill="#dfffff">13.50</text></g>
<g transform="translate(1588,413) rotate(-90)"><rect x="-14.76" y="-5.39" width="29.52" height="10.78" fill="#12f0f0"/><text x="0" y="3.96" font-size="11" text-anchor="middle" fill="#dfffff">50.00</text></g>
<g transform="translate(1588,495.5) rotate(-90)"><rect x="-14.76" y="-5.39" width="29.52" height="10.78" fill="#12f0f0"/><text x="0" y="3.96" font-size="11" text-anchor="middle" fill="#dfffff">82.00</text></g>
<g transform="translate(352,349.6)"><rect x="-17.82" y="-5.39" width="35.64" height="10.78" fill="#000"/><text x="0" y="3.96" font-size="11" text-anchor="middle" fill="#f2f2f2">105.85</text></g>
<g transform="translate(458,349.6)"><rect x="-17.82" y="-5.39" width="35.64" height="10.78" fill="#000"/><text x="0" y="3.96" font-size="11" text-anchor="middle" fill="#f2f2f2">105.85</text></g>
<g transform="translate(565,349.6)"><rect x="-17.82" y="-5.39" width="35.64" height="10.78" fill="#000"/><text x="0" y="3.96" font-size="11" text-anchor="middle" fill="#f2f2f2">105.93</text></g>
<g transform="translate(947.5,354.5)"><rect x="-17.82" y="-5.39" width="35.64" height="10.78" fill="#000"/><text x="0" y="3.96" font-size="11" text-anchor="middle" fill="#f2f2f2">105.93</text></g>
<g transform="translate(1053.8,354.5)"><rect x="-17.82" y="-5.39" width="35.64" height="10.78" fill="#000"/><text x="0" y="3.96" font-size="11" text-anchor="middle" fill="#f2f2f2">105.85</text></g>
<g transform="translate(1161,354.5)"><rect x="-17.82" y="-5.39" width="35.64" height="10.78" fill="#000"/><text x="0" y="3.96" font-size="11" text-anchor="middle" fill="#f2f2f2">105.85</text></g>
<g transform="translate(527.5,338)"><text x="0" y="4.14" font-size="11.5" text-anchor="middle" fill="#f2f2f2">0.15</text></g>
<g transform="translate(1017.5,342)"><text x="0" y="4.14" font-size="11.5" text-anchor="middle" fill="#f2f2f2">0.15</text></g>
<path d="M515,344.5 L539,344.5 L511,357 M1005.5,348.5 L1030,348.5 M1005.5,348.5 L1000,358" fill="none" stroke="#19d9d9" stroke-width="1"/>
<g transform="translate(-10,524.3)"><rect x="-14.76" y="-5.39" width="29.52" height="10.78" fill="#000"/><text x="0" y="3.96" font-size="11" text-anchor="middle" fill="#f2f2f2">83.00</text></g>
<g transform="translate(84,524.3)"><rect x="-14.76" y="-5.39" width="29.52" height="10.78" fill="#000"/><text x="0" y="3.96" font-size="11" text-anchor="middle" fill="#f2f2f2">83.00</text></g>
<g transform="translate(167.5,524.3)"><rect x="-14.76" y="-5.39" width="29.52" height="10.78" fill="#000"/><text x="0" y="3.96" font-size="11" text-anchor="middle" fill="#f2f2f2">83.00</text></g>
<g transform="translate(256,524.3)"><rect x="-14.76" y="-5.39" width="29.52" height="10.78" fill="#000"/><text x="0" y="3.96" font-size="11" text-anchor="middle" fill="#f2f2f2">93.00</text></g>
<g transform="translate(292.5,414) rotate(-90)"><rect x="-14.76" y="-5.39" width="29.52" height="10.78" fill="#000"/><text x="0" y="3.96" font-size="11" text-anchor="middle" fill="#f2f2f2">80.00</text></g>
<g transform="translate(292.5,494) rotate(-90)"><rect x="-14.76" y="-5.39" width="29.52" height="10.78" fill="#000"/><text x="0" y="3.96" font-size="11" text-anchor="middle" fill="#f2f2f2">80.00</text></g>
<g transform="translate(1433.8,251.8)"><rect x="-14.76" y="-5.39" width="29.52" height="10.78" fill="#000"/><text x="0" y="3.96" font-size="11" text-anchor="middle" fill="#f2f2f2">38.00</text></g>
<g transform="translate(1446,290) rotate(-90)"><rect x="-14.76" y="-5.39" width="29.52" height="10.78" fill="#000"/><text x="0" y="3.96" font-size="11" text-anchor="middle" fill="#f2f2f2">89.00</text></g>
<g transform="translate(1565.5,258.3)"><rect x="-14.76" y="-5.39" width="29.52" height="10.78" fill="#000"/><text x="0" y="3.96" font-size="11" text-anchor="middle" fill="#f2f2f2">31.50</text></g>
<g transform="translate(1565,407)"><rect x="-14.76" y="-5.39" width="29.52" height="10.78" fill="#000"/><text x="0" y="3.96" font-size="11" text-anchor="middle" fill="#f2f2f2">31.00</text></g>
<rect x="1259" y="512.5" width="15.5" height="20" fill="#000"/>
<g transform="translate(1256,527)"><rect x="-14.76" y="-5.39" width="29.52" height="10.78" fill="#000"/><text x="0" y="3.96" font-size="11" text-anchor="middle" fill="#f2f2f2">92.00</text></g>
<g transform="translate(1588.8,188.8) rotate(-90)"><text x="0" y="3.96" font-size="11" text-anchor="middle" fill="#f2f2f2">99.00</text></g>
<g transform="translate(1588.8,292.5) rotate(-90)"><text x="0" y="3.96" font-size="11" text-anchor="middle" fill="#f2f2f2">107.00</text></g>
<g transform="translate(1319,697) rotate(-90)"><text x="0" y="3.96" font-size="11" text-anchor="middle" fill="#f2f2f2">50.00</text></g>
<g transform="translate(1229,747.5)"><text x="0" y="3.96" font-size="11" text-anchor="middle" fill="#f2f2f2">130.00</text></g>
<path d="M1165,753.5 L1295,753.5 M1162,756 L1168,751 M1292,756 L1298,751 M1326,672.5 L1326,722.5 M1323,670 L1329,675 M1323,720 L1329,725" fill="none" stroke="#19c8c8" stroke-width="1"/>
<path d="M-55.7,342.99 A56.6,56.6 0 0 1 36.9,341.95 A56.6,56.6 0 0 1 129.5,340.9 A56.6,56.6 0 0 1 222.1,339.85 A56.6,56.6 0 0 1 314.7,338.81 A56.6,56.6 0 0 1 407.3,337.76 A56.6,56.6 0 0 1 499.9,336.71 A56.6,56.6 0 0 1 592.5,335.67 A56.6,56.6 0 0 1 685.1,334.62 A56.6,56.6 0 0 1 777.7,333.58 A56.6,56.6 0 0 1 870.3,332.53 A56.6,56.6 0 0 1 962.9,331.48 A56.6,56.6 0 0 1 1055.5,330.44 A56.6,56.6 0 0 1 1148.1,329.39 A56.6,56.6 0 0 1 1240.7,328.34 A56.6,56.6 0 0 1 1333.3,327.3 A56.6,56.6 0 0 1 1425.9,326.25 A56.6,56.6 0 0 1 1518.5,325.2 A56.6,56.6 0 0 1 1611.1,324.16 M-115.1,787.76 A58.1,58.1 0 0 0 -22.55,787.28 A58.1,58.1 0 0 0 70,786.8 A58.1,58.1 0 0 0 162.55,786.32 A58.1,58.1 0 0 0 255.1,785.84 A58.1,58.1 0 0 0 347.65,785.36 A58.1,58.1 0 0 0 440.2,784.87 A58.1,58.1 0 0 0 532.75,784.39 A58.1,58.1 0 0 0 625.3,783.91 A58.1,58.1 0 0 0 717.85,783.43 A58.1,58.1 0 0 0 810.4,782.95 A58.1,58.1 0 0 0 902.95,782.47 A58.1,58.1 0 0 0 995.5,781.99 A58.1,58.1 0 0 0 1088.05,781.51 A58.1,58.1 0 0 0 1180.6,781.02 A58.1,58.1 0 0 0 1273.15,780.54 A58.1,58.1 0 0 0 1365.7,780.06 A58.1,58.1 0 0 0 1458.25,779.58 A58.1,58.1 0 0 0 1550.8,779.1 A58.1,58.1 0 0 0 1643.35,778.62 M174,117.5 A36.5,36.5 0 0 1 174,177.5 A36.5,36.5 0 0 1 174,237.5 A36.5,36.5 0 0 1 174,297.5 M174,297.5 C175.58,298.92 181.29,302.13 183.5,306 C185.71,309.87 187.08,315.37 187.25,320.7 C187.42,326.03 186.54,332.78 184.5,338 C182.46,343.22 179.5,348 175,352 C170.5,356 163.67,360.58 157.5,362 C151.33,363.42 143.58,361.67 138,360.5 C132.42,359.33 128.04,357.1 124,355 C119.96,352.9 115.46,349.08 113.75,347.9 M113.75,347.9 A38.5,38.5 0 0 1 54.25,347.4 A38.5,38.5 0 0 1 -5.5,347.4 M1363,102.5 A36.5,36.5 0 0 0 1363,162.7 A36.5,36.5 0 0 0 1363,223.3 A36.5,36.5 0 0 0 1363,283.5 M1363,283.5 A42.7,42.7 0 1 0 1419,347 M1419,347 A38.5,38.5 0 0 0 1478.6,347 A38.5,38.5 0 0 0 1538.6,347 A38.5,38.5 0 0 0 1598.6,347" fill="none" stroke="#14c814" stroke-width="1.5" stroke-linejoin="miter"/>
<circle cx="-3" cy="420" r="10.3" fill="none" stroke="#e11ad2" stroke-width="2.6"/><text x="-3" y="425" font-size="14" text-anchor="middle" fill="#b848ac">A</text>
<circle cx="80" cy="420" r="10.3" fill="none" stroke="#e11ad2" stroke-width="2.6"/><text x="80" y="425" font-size="14" text-anchor="middle" fill="#b848ac">A</text>
<circle cx="162.5" cy="420" r="10.3" fill="none" stroke="#e11ad2" stroke-width="2.6"/><text x="162.5" y="425" font-size="14" text-anchor="middle" fill="#b848ac">A</text>
<circle cx="247.5" cy="420" r="10.3" fill="none" stroke="#e11ad2" stroke-width="2.6"/><text x="247.5" y="425" font-size="14" text-anchor="middle" fill="#b848ac">A</text>
<circle cx="-3" cy="490.7" r="10.3" fill="none" stroke="#e11ad2" stroke-width="2.6"/><text x="-3" y="495.7" font-size="14" text-anchor="middle" fill="#b848ac">A</text>
<circle cx="80" cy="490.7" r="10.3" fill="none" stroke="#e11ad2" stroke-width="2.6"/><text x="80" y="495.7" font-size="14" text-anchor="middle" fill="#b848ac">A</text>
<circle cx="162.5" cy="490.7" r="10.3" fill="none" stroke="#e11ad2" stroke-width="2.6"/><text x="162.5" y="495.7" font-size="14" text-anchor="middle" fill="#b848ac">A</text>
<circle cx="247.5" cy="490.7" r="10.3" fill="none" stroke="#e11ad2" stroke-width="2.6"/><text x="247.5" y="495.7" font-size="14" text-anchor="middle" fill="#b848ac">A</text>
<circle cx="1266" cy="420" r="10.3" fill="none" stroke="#e11ad2" stroke-width="2.6"/><text x="1266" y="425" font-size="14" text-anchor="middle" fill="#b848ac">B</text>
<circle cx="1345" cy="420" r="10.3" fill="none" stroke="#e11ad2" stroke-width="2.6"/><text x="1345" y="425" font-size="14" text-anchor="middle" fill="#b848ac">B</text>
<circle cx="1427.5" cy="420" r="10.3" fill="none" stroke="#e11ad2" stroke-width="2.6"/><text x="1427.5" y="425" font-size="14" text-anchor="middle" fill="#b848ac">B</text>
<circle cx="1513" cy="420" r="10.3" fill="none" stroke="#e11ad2" stroke-width="2.6"/><text x="1513" y="425" font-size="14" text-anchor="middle" fill="#b848ac">B</text>
<circle cx="1266" cy="487.7" r="10.3" fill="none" stroke="#e11ad2" stroke-width="2.6"/><text x="1266" y="492.7" font-size="14" text-anchor="middle" fill="#b848ac">B</text>
<circle cx="1345" cy="487.7" r="10.3" fill="none" stroke="#e11ad2" stroke-width="2.6"/><text x="1345" y="492.7" font-size="14" text-anchor="middle" fill="#b848ac">B</text>
<circle cx="1427.5" cy="487.7" r="10.3" fill="none" stroke="#e11ad2" stroke-width="2.6"/><text x="1427.5" y="492.7" font-size="14" text-anchor="middle" fill="#b848ac">B</text>
<circle cx="1513" cy="487.7" r="10.3" fill="none" stroke="#e11ad2" stroke-width="2.6"/><text x="1513" y="492.7" font-size="14" text-anchor="middle" fill="#b848ac">B</text>
<circle cx="27.5" cy="166" r="10.3" fill="none" stroke="#e11ad2" stroke-width="2.6"/><text x="27.5" y="171" font-size="14" text-anchor="middle" fill="#b848ac">A</text>
<circle cx="27.5" cy="263" r="10.3" fill="none" stroke="#e11ad2" stroke-width="2.6"/><text x="27.5" y="268" font-size="14" text-anchor="middle" fill="#b848ac">C</text>
<circle cx="73" cy="166" r="10.3" fill="none" stroke="#e11ad2" stroke-width="2.6"/><text x="73" y="171" font-size="14" text-anchor="middle" fill="#b848ac">A</text>
<circle cx="73" cy="263" r="10.3" fill="none" stroke="#e11ad2" stroke-width="2.6"/><text x="73" y="268" font-size="14" text-anchor="middle" fill="#b848ac">C</text>
<circle cx="1432.5" cy="176.2" r="10.3" fill="none" stroke="#e11ad2" stroke-width="2.6"/><text x="1432.5" y="181.2" font-size="14" text-anchor="middle" fill="#b848ac">A</text>
<circle cx="1432.5" cy="269.2" r="10.3" fill="none" stroke="#e11ad2" stroke-width="2.6"/><text x="1432.5" y="274.2" font-size="14" text-anchor="middle" fill="#b848ac">A</text>
<circle cx="1476.8" cy="176.2" r="10.3" fill="none" stroke="#e11ad2" stroke-width="2.6"/><text x="1476.8" y="181.2" font-size="14" text-anchor="middle" fill="#b848ac">A</text>
<circle cx="1476.8" cy="269.2" r="10.3" fill="none" stroke="#e11ad2" stroke-width="2.6"/><text x="1476.8" y="274.2" font-size="14" text-anchor="middle" fill="#b848ac">A</text>
<circle cx="1522.5" cy="176.2" r="10.3" fill="none" stroke="#e11ad2" stroke-width="2.6"/><text x="1522.5" y="181.2" font-size="14" text-anchor="middle" fill="#b848ac">A</text>
<circle cx="1522.5" cy="269.2" r="10.3" fill="none" stroke="#e11ad2" stroke-width="2.6"/><text x="1522.5" y="274.2" font-size="14" text-anchor="middle" fill="#b848ac">A</text>
<rect x="1165" y="672.5" width="130" height="50" fill="none" stroke="#c8c8c8" stroke-width="1.3"/>
<path d="M1167,680.5 Q1230,685.5 1291,677.5 L1292.5,703 Q1230,711.5 1167,705 Z" fill="#8a2503" stroke="#f0dcd2" stroke-width="1"/>
<path d="M1167,680.5 Q1230,685.5 1291,677.5 L1292.5,703" fill="none" stroke="#1a14be" stroke-width="1.4"/>
<path d="M1268.5,606 L1279.5,597.5 L1303,625 L1292,631 Z" fill="#8a2503" stroke="#f0dcd2" stroke-width="1"/>
<path d="M1292,631 L1288,628 L1292.5,634 L1302.5,627" fill="none" stroke="#35d435" stroke-width="1.2"/>
<path d="M17,808 L17,767 M17,808 L58.5,808 M13,804 h8.5 v8.5 h-8.5 z" fill="none" stroke="#e8e8e8" stroke-width="1.2"/>
<path d="M18.5,752 L23,758.5 L27.5,752 M23,758.5 L23,764" fill="none" stroke="#e8e8e8" stroke-width="1.2"/>
<path d="M62.5,797.5 L72.5,808 M72.5,797.5 L62.5,808" fill="none" stroke="#e8e8e8" stroke-width="1.2"/>
<path d="M1449,727.5 L1529.5,727.5 M1489.5,687.5 L1489.5,767.5" fill="none" stroke="#dcdcdc" stroke-width="1.1"/>
<rect x="1486.7" y="724.7" width="5.6" height="5.6" fill="#000" stroke="#eee" stroke-width="1"/>
<text x="3" y="159.3" font-size="10.5" fill="#0a0a10" style="letter-spacing:-0.1px">[−][Top][2D Wireframe]</text>
<path d="M1549.5,158.5 h8" stroke="#f4f4f4" stroke-width="2" fill="none"/>
<path d="M1566.3,154.8 h5.2 v5.2 h-5.2 z M1568.2,154.5 v-1.8 h5.2 v5.2 h-1.8" stroke="#f4f4f4" stroke-width="1.3" fill="none"/>
<path d="M1583.2,153.2 L1589.8,160 M1589.8,153.2 L1583.2,160" stroke="#f4f4f4" stroke-width="1.8" fill="none"/>
<rect x="1573.500" y="339" width="24" height="178.500" rx="3" fill="#d0d0d0" fill-opacity="0.40"/>
<circle cx="1586" cy="352" r="7" fill="none" stroke="#3c3c3c" stroke-opacity="0.450" stroke-width="1.200"/><path d="M1580,380 c0,-8 12,-8 12,0 v6 h-12 z" fill="none" stroke="#3c3c3c" stroke-opacity="0.400" stroke-width="1.100"/><circle cx="1586" cy="450" r="5" fill="none" stroke="#3c3c3c" stroke-opacity="0.400" stroke-width="1.100"/><path d="M1579,478 h14 v9 h-14 z" fill="none" stroke="#3c3c3c" stroke-opacity="0.350" stroke-width="1"/>
<circle cx="1530.3" cy="232.5" r="41" fill="none" stroke="#ffffff" stroke-opacity="0.12" stroke-width="12.5"/>
<rect x="1510" y="212" width="42" height="41" fill="#e9e9e9" fill-opacity="0.62"/>
<rect x="1516" y="218" width="30" height="29" fill="#d4d4d4" fill-opacity="0.45"/>
<text x="1531" y="236.5" font-size="10" font-weight="bold" text-anchor="middle" fill="#7d8188">TOP</text>
<text x="1530.5" y="192" font-size="16.5" font-weight="bold" text-anchor="middle" fill="#ffffff" fill-opacity="0.55">N</text>
<text x="1530" y="285" font-size="16.5" font-weight="bold" text-anchor="middle" fill="#ffffff" fill-opacity="0.55">S</text>
<text x="1484" y="239.5" font-size="16.5" font-weight="bold" text-anchor="middle" fill="#ffffff" fill-opacity="0.55">W</text>
<text x="1577.5" y="239.5" font-size="16.5" font-weight="bold" text-anchor="middle" fill="#ffffff" fill-opacity="0.55">E</text>
<rect x="1512" y="306" width="38" height="13" rx="3" fill="#e9e9e9" fill-opacity="0.6"/>
<text x="1515" y="316" font-size="9.5" fill="#8a8d92">WCS</text>
<path d="M1541,311 h6 l-3,3.4 z" fill="none" stroke="#9a9da2" stroke-width="0.9"/>
<path d="M-3,362 L10,392.5 L16,392.5 M79.5,368 L88.7,393 L96,393 M162,368 L172.5,393 L180,393 M244.2,368 L253.7,393 L261,393 M78,550 L52.5,602.5 L25,602.5 M171.2,550 L145.7,602.5 L117.5,602.5 M243,550 L217.5,602.5 L188.7,602.5 M0.5,547.5 L-20,590 M365,603.6 L340,656.2 L321.2,656.2 M441,649.6 L416.5,702 L398.5,702 M556.6,696.4 L532,749.5 L514,749.5 M695.5,723.4 L670,776.5 L652,776.5 M823.4,723.4 L851,755.5 L857,755.5 M950,698 L978.5,731 L985,731 M1069.4,649.6 L1097,683 L1103,683 M1171,586 L1199,618 L1204,618 M335.5,366.4 L344.5,391 L353.5,391 M435,366.4 L443.5,391 L452,391 M560.5,368.5 L569.5,394 L578,394 M562,395 L538,413.5 L517,413.5 M596.5,435.4 L572.5,464.5 L554.5,464.5 M621.4,501 L596.5,535 L580,535 M641.5,555 L616,586.6 L596.5,586.6 M681.4,598.6 L656.5,622 L637,622 M701.5,663.4 L676,688.6 L662.5,688.6 M298.6,416.5 L308.5,440.5 L315.4,440.5 M300.4,468 L308.5,487.6 L316,487.6 M305.5,541.6 L313,529 L320.5,529 M948,389.5 L963.5,409.6 L971,409.6 M929,445.6 L938,470.5 L945,470.5 M897,502.6 L906.5,526.6 L913,526.6 M871,550 L888.5,569.5 L895,569.5 M842,607 L852.5,631.6 L858,631.6 M815.6,665.5 L825.5,689.5 L831,689.5 M1214.6,421 L1207,406 L1190,406 M1214.6,505.6 L1207,489.4 L1190,489.4 M1210,546.4 L1204,529.6 L1185,529.6 M949.5,361 L960,323.7 L968,323.7 M1051,361 L1061,323.7 L1069,323.7 M1156,361 L1167.5,323.7 L1174,323.7 M756.8,462.8 L751,447 L736,447 M759,511 L752,496 L732,496 M761,571 L752,556 L732,556 M761,631 L752,616 L732,616 M766,692.8 L760,676.8 L738,676.8 M2.5,183 L11,207 L20,207 M50,183 L58.7,207 L68,207 M80.5,239.2 L73.7,222.5 L61,222.5 M6.2,263.7 L16,287.5 L25,287.5 M54.5,263.7 L63.7,287.5 L72,287.5 M115.5,202.5 L142.5,234.5 L150,234.5 M115.5,299.5 L142.5,332 L150,332 M-2,338 L8,365 L17,365 M39.4,341.7 L48,365.4 L57,365.4 M1403.7,173 L1378.7,226 L1358,226 M1403.7,277 L1378,330.5 L1361,330.5 M1457.5,183.7 L1467,207.5 L1475,207.5 M1506,183.7 L1516,207.5 L1524,207.5 M1442.5,239.2 L1435,222.5 L1422.5,222.5 M1457.5,277.5 L1467,303 L1475,303 M1506,277.5 L1516,303 L1524,303 M1565,186 L1592.5,219.5 L1602,219.5 M1560,298 L1590,331 L1596,331 M1432.5,340 L1438.7,365.5 L1447,365.5 M1500,340 L1506,365.5 L1514,365.5 M1259.5,550.5 L1287.5,582.5 L1293,582.5 M1331,550.5 L1357.5,582.5 L1365,582.5 M1420.5,550.5 L1446,582.5 L1453,582.5 M1560,552 L1589,585 L1596,585 M1247.5,703.7 L1275,736 L1282,736 M1287.5,619.5 L1316,650 L1321,650 M1252.5,357.5 L1261,323.7 L1268,323.7 M1313.7,362.5 L1324,323.7 L1332,323.7 M1409.5,362.5 L1413.7,325 L1427,325 M1501,362.5 L1510,325 L1518,325" fill="none" stroke="#1616c4" stroke-width="1.2"/>
<g fill="#1a1ae0"><circle cx="-3" cy="362" r="2.1"/><circle cx="79.5" cy="368" r="2.1"/><circle cx="162" cy="368" r="2.1"/><circle cx="244.2" cy="368" r="2.1"/><circle cx="78" cy="550" r="2.1"/><circle cx="171.2" cy="550" r="2.1"/><circle cx="243" cy="550" r="2.1"/><circle cx="0.5" cy="547.5" r="2.1"/><circle cx="365" cy="603.6" r="2.1"/><circle cx="441" cy="649.6" r="2.1"/><circle cx="556.6" cy="696.4" r="2.1"/><circle cx="695.5" cy="723.4" r="2.1"/><circle cx="823.4" cy="723.4" r="2.1"/><circle cx="950" cy="698" r="2.1"/><circle cx="1069.4" cy="649.6" r="2.1"/><circle cx="1171" cy="586" r="2.1"/><circle cx="335.5" cy="366.4" r="2.1"/><circle cx="435" cy="366.4" r="2.1"/><circle cx="560.5" cy="368.5" r="2.1"/><circle cx="562" cy="395" r="2.1"/><circle cx="596.5" cy="435.4" r="2.1"/><circle cx="621.4" cy="501" r="2.1"/><circle cx="641.5" cy="555" r="2.1"/><circle cx="681.4" cy="598.6" r="2.1"/><circle cx="701.5" cy="663.4" r="2.1"/><circle cx="298.6" cy="416.5" r="2.1"/><circle cx="300.4" cy="468" r="2.1"/><circle cx="305.5" cy="541.6" r="2.1"/><circle cx="948" cy="389.5" r="2.1"/><circle cx="929" cy="445.6" r="2.1"/><circle cx="897" cy="502.6" r="2.1"/><circle cx="871" cy="550" r="2.1"/><circle cx="842" cy="607" r="2.1"/><circle cx="815.6" cy="665.5" r="2.1"/><circle cx="1214.6" cy="421" r="2.1"/><circle cx="1214.6" cy="505.6" r="2.1"/><circle cx="1210" cy="546.4" r="2.1"/><circle cx="949.5" cy="361" r="2.1"/><circle cx="1051" cy="361" r="2.1"/><circle cx="1156" cy="361" r="2.1"/><circle cx="756.8" cy="462.8" r="2.1"/><circle cx="759" cy="511" r="2.1"/><circle cx="761" cy="571" r="2.1"/><circle cx="761" cy="631" r="2.1"/><circle cx="766" cy="692.8" r="2.1"/><circle cx="2.5" cy="183" r="2.1"/><circle cx="50" cy="183" r="2.1"/><circle cx="80.5" cy="239.2" r="2.1"/><circle cx="6.2" cy="263.7" r="2.1"/><circle cx="54.5" cy="263.7" r="2.1"/><circle cx="115.5" cy="202.5" r="2.1"/><circle cx="115.5" cy="299.5" r="2.1"/><circle cx="-2" cy="338" r="2.1"/><circle cx="39.4" cy="341.7" r="2.1"/><circle cx="1403.7" cy="173" r="2.1"/><circle cx="1403.7" cy="277" r="2.1"/><circle cx="1457.5" cy="183.7" r="2.1"/><circle cx="1506" cy="183.7" r="2.1"/><circle cx="1442.5" cy="239.2" r="2.1"/><circle cx="1457.5" cy="277.5" r="2.1"/><circle cx="1506" cy="277.5" r="2.1"/><circle cx="1565" cy="186" r="2.1"/><circle cx="1560" cy="298" r="2.1"/><circle cx="1432.5" cy="340" r="2.1"/><circle cx="1500" cy="340" r="2.1"/><circle cx="1259.5" cy="550.5" r="2.1"/><circle cx="1331" cy="550.5" r="2.1"/><circle cx="1420.5" cy="550.5" r="2.1"/><circle cx="1560" cy="552" r="2.1"/><circle cx="1247.5" cy="703.7" r="2.1"/><circle cx="1287.5" cy="619.5" r="2.1"/><circle cx="1252.5" cy="357.5" r="2.1"/><circle cx="1313.7" cy="362.5" r="2.1"/><circle cx="1409.5" cy="362.5" r="2.1"/><circle cx="1501" cy="362.5" r="2.1"/></g>
<g fill="#1a28ba"><text x="17" y="392.5" font-size="14">AE'</text><text x="96.5" y="392.5" font-size="14">B'</text><text x="180.5" y="392.5" font-size="14">B'</text><text x="261.5" y="392.5" font-size="14">C'</text><text x="26.2" y="601" font-size="14">AB'</text><text x="118.7" y="601" font-size="14">AB'</text><text x="190" y="601" font-size="14">AA'</text><text x="322.5" y="654" font-size="14">Y'</text><text x="400" y="700" font-size="14">Y'</text><text x="515.3" y="747.5" font-size="14">Y'</text><text x="653.3" y="774.5" font-size="14">Y'</text><text x="858.5" y="755" font-size="14">Y'</text><text x="986.3" y="729.5" font-size="14">Y'</text><text x="1104" y="681.6" font-size="14">Y'</text><text x="1206" y="617.5" font-size="14">Y'</text><text x="354.5" y="391" font-size="14">A'</text><text x="454" y="391" font-size="14">A'</text><text x="580" y="393" font-size="14">A'</text><text x="517" y="412.5" font-size="14">D'</text><text x="554.5" y="463" font-size="14">E'</text><text x="580" y="533.5" font-size="14">F'</text><text x="596.5" y="585.5" font-size="14">G'</text><text x="637" y="620.5" font-size="14">H'</text><text x="663.5" y="687.5" font-size="14">I'</text><text x="317" y="440.5" font-size="14">Z'</text><text x="318" y="488" font-size="14">Z'</text><text x="322.5" y="528" font-size="14">T'</text><text x="972" y="409.5" font-size="14">D'</text><text x="946.4" y="470.5" font-size="14">E'</text><text x="914" y="526" font-size="14">F'</text><text x="896.6" y="569.5" font-size="14">G'</text><text x="859" y="631" font-size="14">H'</text><text x="833" y="689" font-size="14">I'</text><text x="1190" y="403.5" font-size="14">Z'</text><text x="1190" y="487" font-size="14">Z'</text><text x="1185" y="527" font-size="14">T'</text><text x="970" y="323.5" font-size="14">A'</text><text x="1071" y="323.5" font-size="14">A'</text><text x="1176" y="323.5" font-size="14">A'</text><text x="736.5" y="445" font-size="14">J'</text><text x="732" y="494" font-size="14">U'</text><text x="732" y="554" font-size="14">U'</text><text x="732" y="614" font-size="14">U'</text><text x="738" y="675" font-size="14">O'</text><text x="20.5" y="206" font-size="14">J'</text><text x="68" y="206" font-size="14">J'</text><text x="60" y="220" font-size="14">I'</text><text x="26" y="287.5" font-size="14">J'</text><text x="74" y="287.5" font-size="14">J'</text><text x="150" y="234.5" font-size="14">G'</text><text x="150" y="331.5" font-size="14">F'</text><text x="17.5" y="364" font-size="14">D'</text><text x="57.7" y="367" font-size="14">D</text><text x="1358.7" y="224.5" font-size="14">G'</text><text x="1361" y="328.5" font-size="14">F'</text><text x="1476" y="207.5" font-size="14">J'</text><text x="1525" y="207.5" font-size="14">J'</text><text x="1422" y="221" font-size="14">I'</text><text x="1478" y="302.5" font-size="14">J'</text><text x="1525" y="302.5" font-size="14">J'</text><text x="1595" y="330" font-size="14">D</text><text x="1450" y="364" font-size="14">E'</text><text x="1517" y="364" font-size="14">E'</text><text x="1291" y="582" font-size="14">S'</text><text x="1364" y="582" font-size="14">R'</text><text x="1452.5" y="582" font-size="14">R'</text><text x="1595" y="584" font-size="14">P</text><text x="1283" y="735.5" font-size="14">Y'</text><text x="1320" y="649.5" font-size="14">T'</text><text x="1269" y="323.2" font-size="15.5" style="font-family:'Liberation Serif',serif">K'</text><text x="1334" y="323.2" font-size="15.5" style="font-family:'Liberation Serif',serif">I'</text><text x="1428.5" y="323.2" font-size="15.5" style="font-family:'Liberation Serif',serif">L'</text><text x="1519.5" y="323.2" font-size="15.5" style="font-family:'Liberation Serif',serif">M'</text></g>
<text x="95" y="742.5" font-size="34" fill="#0a0aff" style="letter-spacing:-0.2px">oliv marron</text>
</g>
</svg>
<div class="r" style="left:0px;top:0px;width:1600px;height:143px;background:#222933;"></div>
<div class="r" style="left:38.2px;top:22.7px;width:42.6px;height:15.3px;background:#3b4453;border-radius:2px 2px 0 0;"></div>
<div class="r" style="left:2px;top:37.5px;width:1596px;height:80.5px;background:#3b4453;"></div>
<div class="r" style="left:186.2px;top:38.5px;width:1.6px;height:79px;background:#2c3340;"></div>
<div class="r" style="left:395.2px;top:38.5px;width:1.6px;height:79px;background:#2c3340;"></div>
<div class="r" style="left:552.7px;top:38.5px;width:1.6px;height:79px;background:#2c3340;"></div>
<div class="r" style="left:780.7px;top:38.5px;width:1.6px;height:79px;background:#2c3340;"></div>
<div class="r" style="left:914.2px;top:38.5px;width:1.6px;height:79px;background:#2c3340;"></div>
<div class="r" style="left:1135.2px;top:38.5px;width:1.6px;height:79px;background:#2c3340;"></div>
<div class="r" style="left:1192.2px;top:38.5px;width:1.6px;height:79px;background:#2c3340;"></div>
<div class="r" style="left:1273.2px;top:38.5px;width:1.6px;height:79px;background:#2c3340;"></div>
<div class="r" style="left:1340.7px;top:38.5px;width:1.6px;height:79px;background:#2c3340;"></div>
<svg class="ico" style="left:0;top:0" width="1600" height="143" viewBox="0 0 1600 143">
<path d="M7.5,28.5 L15.5,5.5 L20.5,5.5 L27.5,28.5 L22,28.5 L20.3,22.5 L13.8,24.5 L12.6,28.5 Z M15.2,19.3 L19.2,18 L17.6,11.5 Z" fill="#d8232a" fill-rule="evenodd"/>
<path d="M7.5,28.5 L12.6,28.5 L13.8,24.5 L20.3,22.5 L19.2,18 L15.2,19.3 Z" fill="#9c1218"/>
<path d="M41.5,4.5 h9 l4,4 v9 h-13 z" fill="#d9dce1"/>
<path d="M61.5,16.5 v-11 h5 l1.5,2 h5.5 v3" fill="none" stroke="#d9dce1" stroke-width="1.6"/><path d="M61.5,17 l3.5,-7 h10.5 l-3.5,7 z" fill="#d9dce1"/>
<rect x="82" y="4" width="13" height="13" rx="1" fill="#d9dce1"/><rect x="85" y="4.5" width="7" height="4.5" fill="#4b5567"/><rect x="84.5" y="11" width="8" height="6" fill="#fff"/>
<rect x="101" y="4" width="13" height="13" rx="1" fill="#d9dce1"/><rect x="104" y="4.5" width="7" height="4.5" fill="#4b5567"/><path d="M108,16 l6.5,-6.5 l2,2 l-6.5,6.5 l-2.8,0.6 z" fill="#f0b54a"/>
<rect x="122.5" y="4" width="9" height="13" rx="1" fill="#a9aeb7"/><path d="M127,12.5 h3 l1,1.2 h4 v4 h-8 z" fill="#f0b54a"/>
<rect x="145" y="4" width="8" height="13.5" rx="1" fill="none" stroke="#d9dce1" stroke-width="1.5"/><path d="M141.5,10.5 h6 m-2.4,-2.6 l2.6,2.6 l-2.6,2.6" fill="none" stroke="#62b5e5" stroke-width="1.6"/>
<rect x="165" y="4" width="8" height="4" fill="#d9dce1"/><rect x="162" y="8" width="14" height="6.5" rx="1" fill="#d9dce1"/><rect x="165" y="12.5" width="8" height="5" fill="#fff" stroke="#62b5e5" stroke-width="0.8"/>
<path d="M182,10 l5.5,-5 v3 c4,0 7,2 7.5,7 c-1.5,-2.5 -4,-3.3 -7.5,-3.2 v3.2 z" fill="#d9dce1"/>
<path d="M224.5,10 l-5.500,-5 v3 c-4,0 -7,2 -7.5,7 c1.5,-2.5 4,-3.3 7.5,-3.2 v3.200 z" fill="#6d7684"/>
<path d="M200.5,7.600 h5 l-2.500,3 z" fill="#d9dce1"/><path d="M230.500,7.600 h5 l-2.500,3 z" fill="#7d8593"/>
<path d="M241.5,6 h7 M241.500,9 h7 l-3.500,4 z" fill="#d9dce1" stroke="#d9dce1" stroke-width="1.2"/>
<path d="M1121.500,6 l3.500,3.500 l-3.500,3.500 z" fill="#d9dce1"/>
<circle cx="1287.500" cy="8" r="4.600" fill="none" stroke="#d9dce1" stroke-width="1.500"/><path d="M1291,11.500 l4,4.500" stroke="#d9dce1" stroke-width="1.800"/>
<circle cx="1309" cy="6.500" r="3.600" fill="#d9dce1"/><path d="M1302.500,16.500 c0,-5 3,-6.500 6.500,-6.500 s6.500,1.500 6.500,6.500 z" fill="#d9dce1"/>
<path d="M1390,8.500 h5 l-2.500,3 z" fill="#d9dce1"/>
<path d="M1404,5 h2.500 l2,8 h7 l1.500,-5.500 h-9.500" fill="none" stroke="#d9dce1" stroke-width="1.500"/><circle cx="1409.500" cy="15.500" r="1.300" fill="#d9dce1"/><circle cx="1415" cy="15.500" r="1.300" fill="#d9dce1"/>
<path d="M1424.500,15.500 l6,-11 l6,11 M1426.500,12.500 c2,-3 6,-3 8,0" fill="none" stroke="#d9dce1" stroke-width="2"/>
<path d="M1441.500,8.500 h5 l-2.500,3 z" fill="#d9dce1"/>
<path d="M1454.500,3 v14" stroke="#4a5363" stroke-width="1"/>
<circle cx="1469" cy="9.500" r="6.600" fill="#d9dce1"/><text x="1469" y="13.500" font-size="11" font-weight="bold" text-anchor="middle" fill="#2a303b" style="font-family:'Liberation Sans',sans-serif">?</text>
<path d="M1481,8.500 h5 l-2.500,3 z" fill="#d9dce1"/>
<path d="M1544.500,14.500 h7" stroke="#f2f2f2" stroke-width="1.600"/>
<path d="M1563.500,8 h7.500 v6.500 h-7.500 z M1565.500,8 v-2.500 h7.500 v6.500 h-2" fill="none" stroke="#f2f2f2" stroke-width="1.500"/>
<path d="M1584.500,4.500 l9.500,9.500 M1594,4.500 l-9.500,9.500" stroke="#f2f2f2" stroke-width="1.800"/>
<rect x="673.500" y="25.500" width="12" height="7" rx="1" fill="#f0f0f0"/><path d="M677,30.500 h5 l-2.500,-3 z" fill="#444"/><path d="M688.500,28 h5 l-2.500,3 z" fill="#d9dce1"/>
<path d="M6.500,69 L31,44.500" stroke="#d9dce1" stroke-width="1.300"/>
<rect x="4.8" y="67.3" width="3.400" height="3.400" fill="#62b5e5"/>
<rect x="29.3" y="42.8" width="3.400" height="3.400" fill="#62b5e5"/>
<path d="M43,62.500 H60 a6,6 0 0 0 0,-12 H58.500" fill="none" stroke="#d9dce1" stroke-width="1.300"/>
<rect x="41.3" y="60.8" width="3.400" height="3.400" fill="#62b5e5"/>
<rect x="57.8" y="60.8" width="3.400" height="3.400" fill="#62b5e5"/>
<rect x="57.3" y="48.8" width="3.400" height="3.400" fill="#62b5e5"/>
<circle cx="96.200" cy="56.200" r="12.400" fill="none" stroke="#d9dce1" stroke-width="1.300"/><path d="M96.500,57 L102.500,50.500" stroke="#62b5e5" stroke-width="1.400"/><path d="M103.500,49.500 l-4,0.800 l3.200,3.200 z" fill="#62b5e5"/><rect x="95" y="55.500" width="3" height="3" fill="#62b5e5"/>
<path d="M124.500,67.500 C126,56 134,47 147.500,45.500" fill="none" stroke="#d9dce1" stroke-width="1.300"/>
<rect x="122.8" y="65.8" width="3.400" height="3.400" fill="#62b5e5"/>
<rect x="129.8" y="50.8" width="3.400" height="3.400" fill="#62b5e5"/>
<rect x="145.8" y="43.8" width="3.400" height="3.400" fill="#62b5e5"/>
<rect x="156.500" y="46" width="11" height="8.500" fill="none" stroke="#d9dce1" stroke-width="1.300"/><rect x="155" y="44.500" width="3" height="3" fill="#62b5e5"/><rect x="166" y="53" width="3" height="3" fill="#62b5e5"/>
<ellipse cx="162" cy="70.500" rx="6.500" ry="4.500" fill="none" stroke="#d9dce1" stroke-width="1.300" stroke-dasharray="9 2"/><rect x="160.800" y="69.300" width="2.600" height="2.600" fill="#62b5e5"/>
<rect x="157.500" y="86" width="9" height="9" fill="#4f8fc4"/><path d="M155.500,86 h13 M155.500,95 h13 M157.500,84 v13 M166.500,84 v13" stroke="#d9dce1" stroke-width="1.200"/>
<path d="M174.500,49 h5 l-2.500,3 z" fill="#d9dce1"/>
<path d="M174.500,69 h5 l-2.500,3 z" fill="#d9dce1"/>
<path d="M174.500,89 h5 l-2.500,3 z" fill="#d9dce1"/>
<g transform="translate(193,43.5) scale(0.87)"><path d="M8,1 v14 M1,8 h14" stroke="#d9dce1" stroke-width="1.500"/><path d="M8,0 l-2.500,3 h5 z M8,16 l-2.500,-3 h5 z M0,8 l3,-2.500 v5 z M16,8 l-3,-2.500 v5 z" fill="#d9dce1"/></g>
<g transform="translate(193,63.5) scale(0.87)"><circle cx="4" cy="4" r="2.800" fill="none" stroke="#d9dce1" stroke-width="1.300"/><path d="M8.500,3 h4.500 v3" fill="none" stroke="#d9dce1" stroke-width="1.300"/><circle cx="6.500" cy="12" r="2.800" fill="none" stroke="#62b5e5" stroke-width="1.500"/><circle cx="11.500" cy="12" r="2.800" fill="none" stroke="#62b5e5" stroke-width="1.500"/></g>
<g transform="translate(193,83.5) scale(0.87)"><path d="M2.500,2 h6 v12 h-6 z" fill="none" stroke="#d9dce1" stroke-width="1.300"/><path d="M10,2.500 l3.500,11.500 h-5" fill="none" stroke="#62b5e5" stroke-width="1.200"/><path d="M6,11 h4 m-1.500,-1.500 l1.500,1.500 l-1.500,1.500" stroke="#d9dce1" stroke-width="1" fill="none"/></g>
<g transform="translate(253,43.5) scale(0.87)"><path d="M13,8.500 a5.500,5.500 0 1 1 -4.500,-5.400" fill="none" stroke="#d9dce1" stroke-width="1.400"/><path d="M7,0.500 l4,2.700 l-4,2.600 z" fill="#d9dce1"/></g>
<g transform="translate(253,63.5) scale(0.87)"><path d="M6.500,2 v12 h-5.500 z" fill="none" stroke="#d9dce1" stroke-width="1.300"/><path d="M9.500,2 v12 h5.500 z" fill="none" stroke="#62b5e5" stroke-width="1.300"/></g>
<g transform="translate(253,83.5) scale(0.87)"><rect x="1.500" y="1.500" width="13" height="13" fill="none" stroke="#62b5e5" stroke-width="1.300"/><rect x="1.500" y="8" width="6.500" height="6.500" fill="none" stroke="#d9dce1" stroke-width="1.300"/></g>
<g transform="translate(311,43.5) scale(0.87)"><path d="M1,2 h5 M10,2 h5 M8,0 v5" stroke="#d9dce1" stroke-width="1.200" stroke-dasharray="2 1"/><path d="M6,4 l4,9 M10,4 l-4,9" stroke="#d9dce1" stroke-width="1.400"/><circle cx="5.500" cy="14" r="1.800" fill="none" stroke="#d9dce1" stroke-width="1.100"/><circle cx="10.500" cy="14" r="1.800" fill="none" stroke="#d9dce1" stroke-width="1.100"/></g>
<g transform="translate(311,63.5) scale(0.87)"><path d="M2,15 v-6 a7,7 0 0 1 7,-7 h2" fill="none" stroke="#62b5e5" stroke-width="1.400"/><path d="M11.500,2 h4" stroke="#d9dce1" stroke-width="1.400"/></g>
<g transform="translate(311,83.5) scale(0.87)"><rect x="1" y="1" width="5.500" height="5.500" fill="none" stroke="#62b5e5" stroke-width="1.300"/><rect x="9.500" y="1" width="5.500" height="5.500" fill="none" stroke="#62b5e5" stroke-width="1.300"/><rect x="1" y="9.500" width="5.500" height="5.500" fill="none" stroke="#62b5e5" stroke-width="1.300"/><rect x="9.500" y="9.500" width="5.500" height="5.500" fill="none" stroke="#62b5e5" stroke-width="1.300"/></g>
<path d="M356.7,49 h5 l-2.500,3 z" fill="#d9dce1"/>
<path d="M358.7,69 h5 l-2.500,3 z" fill="#d9dce1"/>
<path d="M358.7,89 h5 l-2.500,3 z" fill="#d9dce1"/>
<g transform="translate(374.5,43.5) scale(0.87)"><path d="M3,13 l8,-10 l3.500,2.500 l-8,10 z" fill="#f3d9b0"/><path d="M3,13 l2.400,-3 l3.500,2.500 l-2.400,3 z" fill="#e2574c"/><path d="M1,15.500 h13" stroke="#62b5e5" stroke-width="1.200"/></g>
<g transform="translate(374.5,63.5) scale(0.87)"><path d="M2,6 h9 v9 h-9 z M2,6 l3.500,-3.500 h9 l-3.500,3.500 M14.500,2.500 v9 l-3.500,3.500" fill="none" stroke="#62b5e5" stroke-width="1.300"/><path d="M5,8 v5 M8,8 v5" stroke="#d9dce1" stroke-width="1.200"/></g>
<g transform="translate(374.5,83.5) scale(0.87)"><path d="M15,2.500 h-8 a5.500,5.500 0 0 0 0,11 h8 M15,5.500 h-8 a2.500,2.500 0 0 0 0,5 h8" fill="none" stroke="#62b5e5" stroke-width="1.300"/></g>
<text x="416.700" y="69" font-size="33" text-anchor="middle" fill="#e6e8ec" style="font-family:'Liberation Sans',sans-serif">A</text>
<path d="M447.500,44 v26 M472.500,44 v26 M447.500,48 h25" stroke="#d9dce1" stroke-width="1.200" fill="none"/><path d="M447.500,48 l3,-1.600 v3.200 z M472.500,48 l-3,-1.600 v3.200 z" fill="#d9dce1"/>
<path d="M460,57 v5 M454.500,59 l3,4 M465.500,59 l-3,4 M451.500,64.500 l4.500,1.500 M468.500,64.500 l-4.500,1.500" stroke="#f6c84b" stroke-width="1.800"/>
<path d="M491,45 v11 M504,45 v11" stroke="#62b5e5" stroke-width="1.300"/><path d="M491,50.500 h13" stroke="#d9dce1" stroke-width="1.400"/>
<path d="M491.500,76 l3,-7 l7,-3" fill="none" stroke="#d9dce1" stroke-width="1.300"/><circle cx="502.500" cy="66.500" r="2.300" fill="none" stroke="#d9dce1" stroke-width="1.200"/><path d="M490.500,77.500 l1,-3.500 l2.500,2 z" fill="#d9dce1"/>
<rect x="491" y="85" width="13" height="11.500" fill="none" stroke="#d9dce1" stroke-width="1.300"/><path d="M491,88.500 h13 M491,92.500 h13 M495.500,88.500 v8 M499.500,88.500 v8" stroke="#d9dce1" stroke-width="1"/>
<path d="M541.2,49 h5 l-2.500,3 z" fill="#d9dce1"/>
<path d="M543.7,69 h5 l-2.500,3 z" fill="#d9dce1"/>
<path d="M566.500,63 l8.500,-9.500 h14 l-8.500,9.500 z" fill="#d9dce0" stroke="#3b4453" stroke-width="1"/>
<path d="M566.500,58 l8.500,-9.500 h14 l-8.500,9.500 z" fill="#d9dce0" stroke="#3b4453" stroke-width="1"/>
<path d="M566.500,53 l8.500,-9.500 h14 l-8.500,9.500 z" fill="#e4e6ea" stroke="#3b4453" stroke-width="1"/>
<rect x="582.500" y="55" width="11" height="15" rx="1.200" fill="#f2f3f5" stroke="#3b4453" stroke-width="0.800"/><rect x="584.300" y="57" width="7.400" height="5" fill="#4aa3e8"/><path d="M585,65 h6 M585,67.500 h6" stroke="#555c66" stroke-width="0.900"/><path d="M586,53.800 h4" stroke="#d9dce0" stroke-width="1"/>
<rect x="607" y="42.500" width="172" height="17" fill="#465063"/>
<circle cx="615.700" cy="48.500" r="4" fill="#f6c84b"/><rect x="614" y="52.500" width="3.400" height="3.600" fill="#e9e9e9"/>
<circle cx="631" cy="50.500" r="3.300" fill="#f6c84b"/><path d="M631,44 v2 M631,55 v2 M624.500,50.500 h2 M635.500,50.500 h2 M626.500,46 l1.400,1.400 M634,53.500 l1.400,1.400 M626.500,55 l1.400,-1.400 M634,47.500 l1.400,-1.400" stroke="#f6c84b" stroke-width="1.300"/>
<rect x="643" y="50" width="8.500" height="6.500" fill="#f6c84b"/><path d="M646.500,50 v-2.500 a2.500,2.500 0 0 1 5,0" fill="none" stroke="#f6c84b" stroke-width="1.500"/>
<rect x="658.700" y="45.500" width="11" height="11" fill="#fff" stroke="#222" stroke-width="0.700"/>
<path d="M771,49.500 h6 l-3,3.500 z" fill="#d9dce1"/>
<path d="M608,70 l5,-5.500 h7.500 l-5,5.500 z" fill="#e1e3e7" stroke="#3b4453" stroke-width="0.500"/>
<circle cx="619.500" cy="72.500" r="3" fill="#4fd0d8"/><rect x="618" y="75.500" width="3" height="2.600" fill="#e9e9e9"/>
<path d="M628,73.7 l5,-5.500 h7.500 l-5,5.500 z" fill="#6fb0e6" stroke="#3b4453" stroke-width="0.500"/>
<path d="M628,71.1 l5,-5.500 h7.500 l-5,5.500 z" fill="#c2c6cd" stroke="#3b4453" stroke-width="0.500"/>
<path d="M628,68.5 l5,-5.500 h7.500 l-5,5.500 z" fill="#e1e3e7" stroke="#3b4453" stroke-width="0.500"/>
<path d="M642.500,72 l-5,5 m0,-3.500 v3.500 h3.500" stroke="#d9dce1" stroke-width="1.200" fill="none"/>
<path d="M648,70 l5,-5.500 h7.500 l-5,5.500 z" fill="#e1e3e7" stroke="#3b4453" stroke-width="0.500"/>
<path d="M658.500,70.500 v7 M655.500,72.200 l6,3.500 M661.500,72.200 l-6,3.500" stroke="#4fd0d8" stroke-width="1.300"/>
<path d="M668,70 l5,-5.500 h7.500 l-5,5.500 z" fill="#e1e3e7" stroke="#3b4453" stroke-width="0.500"/>
<rect x="676.800" y="73" width="6" height="4.800" fill="#4fd0d8"/><path d="M678.200,73 v-1.500 a1.600,1.600 0 0 1 3.200,0 v1.500" fill="none" stroke="#4fd0d8" stroke-width="1.200"/>
<path d="M689,76.7 l5,-5.500 h7.500 l-5,5.500 z" fill="#6fb0e6" stroke="#3b4453" stroke-width="0.500"/>
<path d="M689,74.1 l5,-5.500 h7.500 l-5,5.500 z" fill="#c2c6cd" stroke="#3b4453" stroke-width="0.500"/>
<path d="M689,71.5 l5,-5.500 h7.500 l-5,5.500 z" fill="#e1e3e7" stroke="#3b4453" stroke-width="0.500"/>
<circle cx="695.500" cy="65.500" r="2.600" fill="#e1e3e7"/>
<path d="M608,91.1 l5,-5.500 h7.500 l-5,5.500 z" fill="#c2c6cd" stroke="#3b4453" stroke-width="0.500"/>
<path d="M608,88.5 l5,-5.500 h7.500 l-5,5.500 z" fill="#e1e3e7" stroke="#3b4453" stroke-width="0.500"/>
<circle cx="619.500" cy="92.500" r="3" fill="#f6c84b"/><rect x="618" y="95.500" width="3" height="2.600" fill="#e9e9e9"/>
<path d="M628,93.7 l5,-5.500 h7.500 l-5,5.500 z" fill="#6fb0e6" stroke="#3b4453" stroke-width="0.500"/>
<path d="M628,91.1 l5,-5.500 h7.500 l-5,5.500 z" fill="#c2c6cd" stroke="#3b4453" stroke-width="0.500"/>
<path d="M628,88.5 l5,-5.500 h7.500 l-5,5.500 z" fill="#e1e3e7" stroke="#3b4453" stroke-width="0.500"/>
<path d="M637.500,97 l5,-5 m-3.500,0 h3.500 v3.500" stroke="#d9dce1" stroke-width="1.200" fill="none"/>
<path d="M648,91.1 l5,-5.500 h7.500 l-5,5.500 z" fill="#c2c6cd" stroke="#3b4453" stroke-width="0.500"/>
<path d="M648,88.5 l5,-5.500 h7.500 l-5,5.500 z" fill="#e1e3e7" stroke="#3b4453" stroke-width="0.500"/>
<circle cx="659" cy="94" r="2.400" fill="#f6c84b"/><path d="M659,90 v1.200 M659,96.800 v1.200 M655,94 h1.200 M661.800,94 h1.200 M656.200,91.200 l0.900,0.900 M660.900,95.900 l0.900,0.900 M656.200,96.800 l0.900,-0.900 M660.900,92.100 l0.900,-0.900" stroke="#f6c84b" stroke-width="1"/>
<path d="M668,90 l5,-5.500 h7.500 l-5,5.500 z" fill="#e1e3e7" stroke="#3b4453" stroke-width="0.500"/>
<rect x="675.500" y="93" width="6" height="4.800" fill="#f6c84b"/><path d="M678.500,93 v-1.500 a1.600,1.600 0 0 1 3.200,0" fill="none" stroke="#f6c84b" stroke-width="1.200"/>
<path d="M689,91.1 l5,-5.500 h7.500 l-5,5.500 z" fill="#c2c6cd" stroke="#3b4453" stroke-width="0.500"/>
<path d="M689,88.5 l5,-5.500 h7.500 l-5,5.500 z" fill="#e1e3e7" stroke="#3b4453" stroke-width="0.500"/>
<path d="M696,94 l4,-3 l3.500,4.500 l-4,3 z" fill="#f0c46a"/><path d="M700,91 l2,-1.500 l3.500,4.500 l-2,1.500 z" fill="#f4f4f4"/>
<path d="M797,43 h10.500 l4,4 v15 h-14.500 z" fill="#5aa9e2"/><rect x="786.500" y="50" width="18" height="13" fill="#8e959f" stroke="#dfe2e6" stroke-width="1.200"/><circle cx="804.500" cy="61.500" r="6" fill="#7c838d" stroke="#cfd3d8" stroke-width="1.100"/>
<rect x="818.500" y="49.5" width="8" height="6" fill="none" stroke="#d9dce1" stroke-width="1.200"/><circle cx="828" cy="54" r="3" fill="#8e959f" stroke="#d9dce1" stroke-width="0.800"/>
<rect x="818.500" y="69.5" width="8" height="6" fill="none" stroke="#d9dce1" stroke-width="1.200"/><circle cx="828" cy="74" r="3" fill="#8e959f" stroke="#d9dce1" stroke-width="0.800"/>
<path d="M829,43.500 l1,2.200 l2.300,0.300 l-1.700,1.600 l0.400,2.300 l-2,-1.100 l-2,1.100 l0.400,-2.300 l-1.700,-1.600 l2.300,-0.300 z" fill="#f6c84b"/>
<path d="M824,71 l6,-6 l2,2 l-6,6 z" fill="#f0b54a"/>
<path d="M818,86.500 l4,8 l3,-4 l5,-1.500 z" fill="#e4e6ea"/><path d="M825,90 l6,-6 l2,2 l-6,6 z" fill="#f0b54a"/><path d="M819,85 l3,1" stroke="#e2574c" stroke-width="2"/>
<path d="M905.500,89.500 h5 l-2.500,3 z" fill="#d9dce1"/>
<rect x="930" y="43.500" width="16" height="22" rx="1" fill="#e4e6ea"/><rect x="932.500" y="46" width="11" height="7.500" fill="#55a8e4"/><path d="M933,57 h3 M938,57 h5 M933,60.500 h5 M940,60.500 h3" stroke="#666" stroke-width="1.100"/><path d="M941,60 l6,-4 l8,9 l-4,4 z" fill="#f0b54a"/><path d="M946,57 l4,-3 l5,5.500 l-4,3 z" fill="#f4f4f4"/>
<path d="M975.500,50.500 L975.5,43.5 A7,7 0 0 1 981.56,47 Z" fill="#e94b3c"/>
<path d="M975.500,50.500 L981.56,47 A7,7 0 0 1 981.56,54 Z" fill="#f39c34"/>
<path d="M975.500,50.500 L981.56,54 A7,7 0 0 1 975.5,57.5 Z" fill="#f4e04d"/>
<path d="M975.500,50.500 L975.5,57.5 A7,7 0 0 1 969.44,54 Z" fill="#5cc35a"/>
<path d="M975.500,50.500 L969.44,54 A7,7 0 0 1 969.44,47 Z" fill="#3fa9e0"/>
<path d="M975.500,50.500 L969.44,47 A7,7 0 0 1 975.5,43.5 Z" fill="#8d5bd1"/>
<path d="M969,65 h13 M969,69.500 h13 M969,74.500 h13" stroke="#d9dce1" stroke-width="1.200"/><path d="M969,69.500 h13" stroke="#d9dce1" stroke-width="2.200"/><path d="M969,74.500 h13" stroke="#d9dce1" stroke-width="3"/>
<path d="M969,85.500 h13 M969,90 h13 M969,94.500 h13" stroke="#d9dce1" stroke-width="1.200" stroke-dasharray="3 1.500"/><path d="M969,87.700 h13" stroke="#d9dce1" stroke-width="1" stroke-dasharray="1 1"/>
<rect x="985" y="42.5" width="148" height="16.800" fill="#465063"/>
<path d="M1126,49.5 h6 l-3,3.500 z" fill="#d9dce1"/>
<rect x="985" y="61.2" width="148" height="16.800" fill="#465063"/>
<path d="M1126,68.2 h6 l-3,3.500 z" fill="#d9dce1"/>
<rect x="985" y="81.2" width="148" height="16.800" fill="#465063"/>
<path d="M1126,88.2 h6 l-3,3.500 z" fill="#d9dce1"/>
<rect x="995.500" y="44.500" width="12.500" height="12.500" fill="#fff" stroke="#222" stroke-width="0.700"/>
<path d="M987.500,70 h53.500 M987.500,90 h53.500" stroke="#e4e6ea" stroke-width="1"/>
<path d="M1127.500,108.500 l4,4 m0,-3 v3 h-3" stroke="#d9dce1" stroke-width="1" fill="none"/>
<path d="M1144.500,45.500 h-3 v22 h3 M1156,52 h3 v15.500 h-3" fill="none" stroke="#d9dce1" stroke-width="1.300"/><rect x="1146" y="50" width="6.500" height="6.500" fill="none" stroke="#62b5e5" stroke-width="1.300"/><circle cx="1150" cy="63" r="3.600" fill="#8e959f" stroke="#d9dce1" stroke-width="0.900"/>
<path d="M1160,43 l1.500,3.600 l3.800,-1.200 l-2.300,3.200 l3.200,2.300 l-3.900,0.400 l0.300,3.900 l-2.600,-2.900 l-2.600,2.900 l0.300,-3.900 l-3.900,-0.400 l3.200,-2.300 l-2.300,-3.200 l3.800,1.200 z" fill="#f6c84b"/>
<rect x="1171.800" y="81.800" width="20" height="18" fill="none" stroke="#4d9ad6" stroke-width="1.100"/>
<path d="M1178.500,45.5 h-2 v11 h2 M1185,45.5 h2 v11 h-2" fill="none" stroke="#d9dce1" stroke-width="1.100"/><rect x="1179.500" y="47" width="3.500" height="3.500" fill="none" stroke="#62b5e5" stroke-width="1"/><rect x="1179.500" y="52.5" width="3.500" height="3" fill="#9aa1ab"/>
<path d="M1178.500,65.5 h-2 v11 h2 M1185,65.5 h2 v11 h-2" fill="none" stroke="#d9dce1" stroke-width="1.100"/><rect x="1179.500" y="67" width="3.500" height="3.500" fill="none" stroke="#62b5e5" stroke-width="1"/><rect x="1179.500" y="72.5" width="3.500" height="3" fill="#9aa1ab"/>
<path d="M1178.500,85.1 h-2 v11 h2 M1185,85.1 h2 v11 h-2" fill="none" stroke="#d9dce1" stroke-width="1.100"/><rect x="1179.500" y="86.6" width="3.500" height="3.500" fill="none" stroke="#62b5e5" stroke-width="1"/><rect x="1179.500" y="92.1" width="3.500" height="3" fill="#5cc35a"/>
<path d="M1184,48 l5,5 m0,-5 l-5,5" stroke="#e2574c" stroke-width="1.400"/>
<path d="M1183.500,74.500 l5,-5 l2,2 l-5,5 z" fill="#f0b54a"/>
<path d="M1184,88 v9 l2.400,-2.200 l1.600,3.600 l1.500,-0.700 l-1.600,-3.500 h3.200 z" fill="#fff" stroke="#333" stroke-width="0.500"/>
<rect x="1211.500" y="53" width="25" height="6.500" fill="#f6c84b"/><path d="M1214,53 v3 M1217,53 v2 M1220,53 v3 M1223,53 v2 M1226,53 v3 M1229,53 v2 M1232,53 v3 M1235,53 v2" stroke="#8a6b1c" stroke-width="0.800"/>
<path d="M1256,46 v9 l2.400,-2.200 l1.600,3.600 l1.500,-0.700 l-1.600,-3.500 h3.200 z" fill="#fff"/><rect x="1262" y="50" width="7" height="6" fill="#55a8e4" stroke="#e4e6ea" stroke-width="0.800"/><path d="M1264,44 l-2,3 h2 l-1,3 l3.500,-4 h-2 l1,-2 z" fill="#f6c84b"/>
<rect x="1256.500" y="65.500" width="10" height="10" fill="none" stroke="#5cc35a" stroke-width="1.300" stroke-dasharray="2 1"/><rect x="1259" y="68" width="5" height="5" fill="#5cc35a"/><path d="M1263,69 v9 l2.400,-2.200 l1.600,3.600 l1.500,-0.700 l-1.600,-3.500 h3.200 z" fill="#fff" stroke="#333" stroke-width="0.500"/>
<rect x="1257.500" y="84.500" width="10" height="12.500" rx="1" fill="none" stroke="#d9dce1" stroke-width="1.300"/><rect x="1259.500" y="86.500" width="6" height="2.600" fill="#d9dce1"/><path d="M1259.500,91.500 h6 M1259.500,94 h6" stroke="#d9dce1" stroke-width="1.300" stroke-dasharray="1.400 0.900"/>
<rect x="1286.500" y="46" width="17" height="21" rx="1.500" fill="#d9a066"/><rect x="1291" y="43.500" width="8" height="5" rx="1" fill="#e4e6ea"/><path d="M1294,52 h10 l5,5 v13 h-15 z" fill="#f1f2f4" stroke="#9a9fa8" stroke-width="0.600"/>
<rect x="1322.500" y="45" width="8" height="9" fill="none" stroke="#d9dce1" stroke-width="1.200"/><path d="M1324,48 h5 M1324,51 h5" stroke="#d9dce1" stroke-width="0.900"/><path d="M1328,50 l6,7 M1334,50 l-6,7" stroke="#d9dce1" stroke-width="1.300"/><circle cx="1328" cy="58" r="1.500" fill="none" stroke="#d9dce1" stroke-width="1"/><circle cx="1334" cy="58" r="1.500" fill="none" stroke="#d9dce1" stroke-width="1"/>
<path d="M1323.500,65 h5 l2,2 v7 h-7 z" fill="#d9dce1"/><path d="M1327.500,68.500 h5 l2,2 v7 h-7 z" fill="#d9dce1" stroke="#3b4453" stroke-width="0.800"/>
<path d="M1353.500,50.500 h11.500 v8.500 h16 v12 h-27.500 z" fill="#e9ebee"/>
<path d="M1384.500,108.500 l4,4 m0,-3 v3 h-3" stroke="#d9dce1" stroke-width="1" fill="none"/>
<path d="M94.3,87.2 h4.400 l-2.200,2.600 z" fill="#d9dce1"/>
<path d="M132.3,87.2 h4.400 l-2.200,2.600 z" fill="#d9dce1"/>
<path d="M414.3,87.2 h4.400 l-2.200,2.600 z" fill="#d9dce1"/>
<path d="M797.3,87.2 h4.400 l-2.200,2.600 z" fill="#d9dce1"/>
<path d="M1221.8,87.2 h4.400 l-2.200,2.600 z" fill="#d9dce1"/>
<path d="M1295.4,87.2 h4.400 l-2.200,2.600 z" fill="#d9dce1"/>
<path d="M1365.8,91.2 h4.400 l-2.200,2.600 z" fill="#d9dce1"/>
<path d="M105,109 h6 l-3,3.500 z" fill="#d9dce1"/>
<path d="M307.5,109 h6 l-3,3.500 z" fill="#d9dce1"/>
<path d="M499.5,109 h6 l-3,3.500 z" fill="#d9dce1"/>
<path d="M681,109 h6 l-3,3.500 z" fill="#d9dce1"/>
<path d="M860.2,109 h6 l-3,3.500 z" fill="#d9dce1"/>
<path d="M1042.7,109 h6 l-3,3.500 z" fill="#d9dce1"/>
<path d="M1180,109 h6 l-3,3.500 z" fill="#d9dce1"/>
<path d="M1250,109 h6 l-3,3.500 z" fill="#d9dce1"/>
<path d="M1372,109 h6 l-3,3.500 z" fill="#d9dce1"/>
</svg>
<div class="r" style="left:1130.5px;top:1.5px;width:147px;height:16px;background:#3e4759;"></div>
<div class="t " style="left:1132.8px;top:1.3px;font-size:10.5px;color:#a4acb8;letter-spacing:-0.87px;font-style:italic;">Type a keyword or phrase</div>
<div class="t " style="left:1320.4px;top:1.8px;font-size:11px;color:#e2e5ea;letter-spacing:-0.74px;">Sign In</div>
<div class="t " style="left:526.2px;top:2px;font-size:10.6px;color:#e2e5ea;letter-spacing:-0.46px;">Autodesk AutoCAD 2021</div>
<div class="t " style="left:645px;top:2px;font-size:10.6px;color:#e2e5ea;letter-spacing:-0.84px;">1. KAT ASANSÖR ÖNÜ REVİZE 31.12.2020.dwg</div>
<div class="t " style="left:46.2px;top:21.3px;font-size:10.6px;color:#ffffff;letter-spacing:-0.32px;">Home</div>
<div class="t " style="left:90.5px;top:21.3px;font-size:10.6px;color:#d7dbe1;letter-spacing:-0.55px;">Insert</div>
<div class="t " style="left:131.2px;top:21.3px;font-size:10.6px;color:#d7dbe1;letter-spacing:-0.2px;">Annotate</div>
<div class="t " style="left:188.7px;top:21.3px;font-size:10.6px;color:#d7dbe1;letter-spacing:-0.49px;">Parametric</div>
<div class="t " style="left:253px;top:21.3px;font-size:10.6px;color:#d7dbe1;letter-spacing:-0.65px;">View</div>
<div class="t " style="left:290.5px;top:21.3px;font-size:10.6px;color:#d7dbe1;letter-spacing:-0.52px;">Manage</div>
<div class="t " style="left:342.5px;top:21.3px;font-size:10.6px;color:#d7dbe1;letter-spacing:-0.02px;">Output</div>
<div class="t " style="left:391.2px;top:21.3px;font-size:10.6px;color:#d7dbe1;letter-spacing:-0.21px;">Add-ins</div>
<div class="t " style="left:442.5px;top:21.3px;font-size:10.6px;color:#d7dbe1;letter-spacing:-0.32px;">Collaborate</div>
<div class="t " style="left:510px;top:21.3px;font-size:10.6px;color:#d7dbe1;letter-spacing:-0.64px;">Express Tools</div>
<div class="t " style="left:584.5px;top:21.3px;font-size:10.6px;color:#d7dbe1;letter-spacing:-0.46px;">Featured Apps</div>
<div class="t " style="left:10.5px;top:71.3px;font-size:10.6px;color:#e2e5ea;letter-spacing:-0.63px;">Line</div>
<div class="t " style="left:37.5px;top:71.3px;font-size:10.6px;color:#e2e5ea;letter-spacing:-0.26px;">Polyline</div>
<div class="t " style="left:85px;top:71.3px;font-size:10.6px;color:#e2e5ea;letter-spacing:-0.48px;">Circle</div>
<div class="t " style="left:127.5px;top:71.3px;font-size:10.6px;color:#e2e5ea;letter-spacing:-0.57px;">Arc</div>
<div class="t " style="left:77.5px;top:102.5px;font-size:10.6px;color:#e2e5ea;letter-spacing:-0.56px;">Draw</div>
<div class="t " style="left:212px;top:42.5px;font-size:10.6px;color:#e2e5ea;letter-spacing:-0.43px;">Move</div>
<div class="t " style="left:212px;top:62.5px;font-size:10.6px;color:#e2e5ea;letter-spacing:-0.44px;">Copy</div>
<div class="t " style="left:212px;top:82.5px;font-size:10.6px;color:#e2e5ea;letter-spacing:-0.51px;">Stretch</div>
<div class="t " style="left:272px;top:42.5px;font-size:10.6px;color:#e2e5ea;letter-spacing:-0.54px;">Rotate</div>
<div class="t " style="left:272px;top:62.5px;font-size:10.6px;color:#e2e5ea;letter-spacing:-0.16px;">Mirror</div>
<div class="t " style="left:272px;top:82.5px;font-size:10.6px;color:#e2e5ea;letter-spacing:-0.96px;">Scale</div>
<div class="t " style="left:330px;top:42.5px;font-size:10.6px;color:#e2e5ea;letter-spacing:-0.65px;">Trim</div>
<div class="t " style="left:330px;top:62.5px;font-size:10.6px;color:#e2e5ea;letter-spacing:-0.48px;">Fillet</div>
<div class="t " style="left:330px;top:82.5px;font-size:10.6px;color:#e2e5ea;letter-spacing:-0.57px;">Array</div>
<div class="t " style="left:271.2px;top:102.5px;font-size:10.6px;color:#e2e5ea;letter-spacing:0.01px;">Modify</div>
<div class="t " style="left:408px;top:71.3px;font-size:10.6px;color:#e2e5ea;letter-spacing:-0.61px;">Text</div>
<div class="t " style="left:437px;top:71.3px;font-size:10.6px;color:#e2e5ea;letter-spacing:-0.29px;">Dimension</div>
<div class="t " style="left:508.7px;top:42.5px;font-size:10.6px;color:#e2e5ea;letter-spacing:-0.53px;">Linear</div>
<div class="t " style="left:508.7px;top:62.5px;font-size:10.6px;color:#e2e5ea;letter-spacing:-0.7px;">Leader</div>
<div class="t " style="left:508.7px;top:82.5px;font-size:10.6px;color:#e2e5ea;letter-spacing:-0.67px;">Table</div>
<div class="t " style="left:444.5px;top:102.5px;font-size:10.6px;color:#e2e5ea;letter-spacing:-0.15px;">Annotation</div>
<div class="t " style="left:569.5px;top:71.3px;font-size:10.6px;color:#e2e5ea;letter-spacing:-0.8px;">Layer</div>
<div class="t " style="left:558.7px;top:83px;font-size:10.6px;color:#e2e5ea;letter-spacing:-0.45px;">Properties</div>
<div class="t " style="left:674.5px;top:42.8px;font-size:10.6px;color:#e2e5ea;letter-spacing:-0.39px;">0</div>
<div class="t " style="left:707px;top:62.5px;font-size:10.6px;color:#e2e5ea;letter-spacing:-0.42px;">Make Current</div>
<div class="t " style="left:707px;top:82.5px;font-size:10.6px;color:#e2e5ea;letter-spacing:-0.42px;">Match Layer</div>
<div class="t " style="left:648.7px;top:102.5px;font-size:10.6px;color:#e2e5ea;letter-spacing:-0.8px;">Layers</div>
<div class="t " style="left:787.5px;top:71.3px;font-size:10.6px;color:#e2e5ea;letter-spacing:-0.47px;">Insert</div>
<div class="t " style="left:837px;top:42.5px;font-size:10.6px;color:#e2e5ea;letter-spacing:-0.64px;">Create</div>
<div class="t " style="left:837px;top:62.5px;font-size:10.6px;color:#e2e5ea;letter-spacing:-0.52px;">Edit</div>
<div class="t " style="left:837px;top:82.5px;font-size:10.6px;color:#e2e5ea;letter-spacing:-0.21px;">Edit Attributes</div>
<div class="t " style="left:831.2px;top:102.5px;font-size:10.6px;color:#e2e5ea;letter-spacing:-0.52px;">Block</div>
<div class="t " style="left:928.7px;top:71.3px;font-size:10.6px;color:#e2e5ea;letter-spacing:-0.27px;">Match</div>
<div class="t " style="left:920px;top:83px;font-size:10.6px;color:#e2e5ea;letter-spacing:-0.41px;">Properties</div>
<div class="t " style="left:1016.7px;top:42.8px;font-size:10.6px;color:#e2e5ea;letter-spacing:-0.7px;">ByLayer</div>
<div class="t " style="left:1042.5px;top:62px;font-size:10.6px;color:#e2e5ea;letter-spacing:-0.67px;">ByLayer</div>
<div class="t " style="left:1042.5px;top:82px;font-size:10.6px;color:#e2e5ea;letter-spacing:-0.67px;">ByLayer</div>
<div class="t " style="left:993.7px;top:102.5px;font-size:10.6px;color:#e2e5ea;letter-spacing:-0.45px;">Properties</div>
<div class="t " style="left:1141.2px;top:71.3px;font-size:10.6px;color:#e2e5ea;letter-spacing:-0.53px;">Group</div>
<div class="t " style="left:1143.4px;top:102.5px;font-size:10.6px;color:#e2e5ea;letter-spacing:-0.44px;">Groups</div>
<div class="t " style="left:1205.5px;top:71.3px;font-size:10.6px;color:#e2e5ea;letter-spacing:-0.53px;">Measure</div>
<div class="t " style="left:1211.5px;top:102.5px;font-size:10.6px;color:#e2e5ea;letter-spacing:-0.18px;">Utilities</div>
<div class="t " style="left:1286px;top:71.3px;font-size:10.6px;color:#e2e5ea;letter-spacing:-0.82px;">Paste</div>
<div class="t " style="left:1286.5px;top:102.5px;font-size:10.6px;color:#e2e5ea;letter-spacing:-0.21px;">Clipboard</div>
<div class="t " style="left:1357.6px;top:75.2px;font-size:10.6px;color:#e2e5ea;letter-spacing:-0.94px;">Base</div>
<div class="t " style="left:1346px;top:102.5px;font-size:10.6px;color:#e2e5ea;letter-spacing:-0.55px;">View</div>
<div class="r" style="left:14px;top:122px;width:106px;height:20px;background:#2d3542;border-radius:9px 9px 0 0;transform:skewX(0deg)"></div>
<div class="t " style="left:26.7px;top:124px;font-size:10.6px;color:#c4c9d1;letter-spacing:-0.58px;">Start</div>
<div class="r" style="left:122px;top:122px;width:215px;height:20px;background:#2d3542;border-radius:9px 9px 0 0;transform:skewX(0deg)"></div>
<div class="t " style="left:129.2px;top:124px;font-size:10.6px;color:#c4c9d1;letter-spacing:-0.49px;">Bodrum Kat Asma Tav...Projesi 11.01.2021*</div>
<svg class="ico" style="left:319.8px;top:127.500px" width="10" height="10"><path d="M1.700,1.700 l6,6 M7.700,1.700 l-6,6" stroke="#c4c9d1" stroke-width="1.500"/></svg>
<div class="r" style="left:340px;top:122px;width:212.5px;height:20px;background:#2d3542;border-radius:9px 9px 0 0;transform:skewX(0deg)"></div>
<div class="t " style="left:347px;top:124px;font-size:10.6px;color:#c4c9d1;letter-spacing:-0.72px;">7.02.2021 ZEMİN KAT... TAVAN REVİZE (1)*</div>
<svg class="ico" style="left:534.8px;top:127.500px" width="10" height="10"><path d="M1.700,1.700 l6,6 M7.700,1.700 l-6,6" stroke="#c4c9d1" stroke-width="1.500"/></svg>
<div class="r" style="left:555px;top:122px;width:103.7px;height:20px;background:#2d3542;border-radius:9px 9px 0 0;transform:skewX(0deg)"></div>
<div class="t " style="left:562.5px;top:124px;font-size:10.6px;color:#c4c9d1;letter-spacing:-0.51px;">y-1k-02.04.2021*</div>
<svg class="ico" style="left:640.8px;top:127.500px" width="10" height="10"><path d="M1.700,1.700 l6,6 M7.700,1.700 l-6,6" stroke="#c4c9d1" stroke-width="1.500"/></svg>
<div class="r" style="left:661.5px;top:122px;width:104.5px;height:20px;background:#2d3542;border-radius:9px 9px 0 0;transform:skewX(0deg)"></div>
<div class="t " style="left:668.7px;top:124px;font-size:10.6px;color:#c4c9d1;letter-spacing:-0.59px;">Y-2K-04.04.2021*</div>
<svg class="ico" style="left:748.3px;top:127.500px" width="10" height="10"><path d="M1.700,1.700 l6,6 M7.700,1.700 l-6,6" stroke="#c4c9d1" stroke-width="1.500"/></svg>
<div class="r" style="left:769px;top:122px;width:218.5px;height:20px;background:#2d3542;border-radius:9px 9px 0 0;transform:skewX(0deg)"></div>
<div class="t " style="left:776px;top:124px;font-size:10.6px;color:#c4c9d1;letter-spacing:-0.85px;">MERMER VE BOAT SUP...E HALİ 27.01.2021*</div>
<svg class="ico" style="left:969.8px;top:127.500px" width="10" height="10"><path d="M1.700,1.700 l6,6 M7.700,1.700 l-6,6" stroke="#c4c9d1" stroke-width="1.500"/></svg>
<div class="r" style="left:990px;top:122px;width:215px;height:20px;background:#3b4453;border-radius:9px 9px 0 0;transform:skewX(0deg)"></div>
<div class="t " style="left:998px;top:124px;font-size:10.6px;color:#f1f3f5;letter-spacing:-0.89px;">1. KAT ASANSÖR ÖNÜ REVİZE 31.12.2020*</div>
<svg class="ico" style="left:1184.9px;top:127.500px" width="10" height="10"><path d="M1.700,1.700 l6,6 M7.700,1.700 l-6,6" stroke="#e8eaee" stroke-width="1.500"/></svg>
<div class="r" style="left:1208px;top:124px;width:22px;height:18px;background:#2d3542;border-radius:4px 4px 0 0;"></div>
<svg class="ico" style="left:1214px;top:127.500px" width="10" height="10"><path d="M5,1 v8 M1,5 h8" stroke="#c9cdd4" stroke-width="1.600"/></svg>
<div class="r" style="left:0px;top:142px;width:1600px;height:1.2px;background:#10141b;"></div>
<div class="r" style="left:0px;top:826.5px;width:1600px;height:40px;background:#222933;"></div>
<div class="r" style="left:0px;top:826.5px;width:1600px;height:1.5px;background:#2b323e;"></div>
<svg class="ico" style="left:9px;top:827.500px" width="49.5" height="15"><path d="M0,0 h49.5 l-5,11.500 q-1,2.500 -3.500,2.500 h-32.5 q-2.500,0 -3.500,-2.500 z" fill="#36404f"/></svg>
<svg class="ico" style="left:59.5px;top:827.500px" width="51.5" height="15"><path d="M0,0 h51.5 l-5,11.500 q-1,2.500 -3.500,2.500 h-34.5 q-2.500,0 -3.500,-2.500 z" fill="#2b3340"/></svg>
<svg class="ico" style="left:112.5px;top:827.500px" width="53.5" height="15"><path d="M0,0 h53.5 l-5,11.500 q-1,2.500 -3.500,2.500 h-36.5 q-2.500,0 -3.500,-2.500 z" fill="#2b3340"/></svg>
<svg class="ico" style="left:169px;top:827.500px" width="20" height="15"><path d="M0,0 h20 l-5,11.500 q-1,2.500 -3.500,2.500 h-3 q-2.500,0 -3.500,-2.500 z" fill="#2b3340"/></svg>
<div class="t " style="left:19.5px;top:826.3px;font-size:11px;color:#ffffff;letter-spacing:-0.62px;font-weight:bold;">Model</div>
<div class="t " style="left:67.5px;top:826.3px;font-size:11px;color:#c9ced6;letter-spacing:-0.66px;">Layout1</div>
<div class="t " style="left:121.7px;top:826.3px;font-size:11px;color:#c9ced6;letter-spacing:-0.59px;">Layout2</div>
<svg class="ico" style="left:174.500px;top:830px" width="9" height="9"><path d="M4.500,0.500 v8 M0.500,4.500 h8" stroke="#c9cdd4" stroke-width="1.600"/></svg>
<div class="r" style="left:1127.5px;top:844.5px;width:470px;height:21.5px;background:#2f3947;"></div>
<div class="t " style="left:1130.5px;top:847px;font-size:10.5px;color:#e6e8ec;letter-spacing:-1.07px;">MODEL</div>
<div class="r" style="left:1242.5px;top:845.5px;width:20px;height:19.5px;background:#5b8fd0;"></div>
<div class="r" style="left:1311px;top:845.5px;width:19.5px;height:19.5px;background:#5b8fd0;"></div>
<div class="r" style="left:1332px;top:845.5px;width:19px;height:19.5px;background:#5b8fd0;"></div>
<div class="r" style="left:1367.5px;top:845.5px;width:19px;height:19.5px;background:#5b8fd0;"></div>
<div class="r" style="left:1167.5px;top:846px;width:1px;height:19px;background:#222933;"></div>
<div class="r" style="left:1222px;top:846px;width:1px;height:19px;background:#222933;"></div>
<div class="r" style="left:1360px;top:846px;width:1px;height:19px;background:#222933;"></div>
<div class="r" style="left:1457px;top:846px;width:1px;height:19px;background:#222933;"></div>
<svg class="ico" style="left:0;top:843px" width="1600" height="24" viewBox="0 843 1600 24">
<path d="M1171,851 h13 M1171,855 h13 M1171,859 h13 M1173.500,848.500 v13 M1177.500,848.500 v13 M1181.500,848.500 v13" stroke="#dfe2e7" stroke-width="1.100"/>
<path d="M1192,850 h12 M1192,855 h12 M1192,860 h12" stroke="#dfe2e7" stroke-width="1.800" stroke-dasharray="1.800 3.200"/>
<path d="M1211,853.500 h6 l-3,3.500 z" fill="#dfe2e7"/>
<path d="M1267,853.500 h6 l-3,3.500 z" fill="#dfe2e7"/>
<path d="M1301,853.500 h6 l-3,3.500 z" fill="#dfe2e7"/>
<path d="M1355.5,853.500 h6 l-3,3.500 z" fill="#dfe2e7"/>
<path d="M1446,853.500 h6 l-3,3.500 z" fill="#dfe2e7"/>
<path d="M1482,853.500 h6 l-3,3.500 z" fill="#dfe2e7"/>
<path d="M1227.500,848 v14 h12 M1227.500,857 h4.500 v5" fill="none" stroke="#dfe2e7" stroke-width="1.300"/>
<circle cx="1251.500" cy="856" r="5.500" fill="none" stroke="#fff" stroke-width="1.400"/><path d="M1251.500,856 h8 M1251.500,856 l6,-7" stroke="#fff" stroke-width="1.300" fill="none"/>
<path d="M1282.500,848.500 l10,13" stroke="#e2574c" stroke-width="1.200"/><path d="M1287.500,847.500 v15" stroke="#5cc35a" stroke-width="1.300"/><path d="M1282,859 l11,-6" stroke="#dfe2e7" stroke-width="1"/>
<path d="M1314.500,861.500 h13 M1314.500,861.500 l11,-11" stroke="#fff" stroke-width="1.400"/><circle cx="1322" cy="857" r="1.500" fill="#fff"/>
<rect x="1337" y="851" width="10" height="10" fill="none" stroke="#fff" stroke-width="1.300"/><rect x="1335" y="849" width="4" height="4" fill="#5b8fd0" stroke="#fff" stroke-width="1"/>
<path d="M1371.5,862 l5,-13 l5,13 l-5,-4 z" fill="#fff"/>
<circle cx="1384" cy="850.500" r="1.600" fill="none" stroke="#fff" stroke-width="0.900"/>
<path d="M1391.5,862 l5,-13 l5,13 l-5,-4 z" fill="#dfe2e7"/>
<path d="M1402,847 l-1.500,3 h1.500 l-1,2.500 l3,-3.500 h-1.500 l1,-2 z" fill="#dfe2e7"/>
<path d="M1412.5,862 l5,-13 l5,13 l-5,-4 z" fill="#dfe2e7"/>
<circle cx="1467.500" cy="855.500" r="3.800" fill="none" stroke="#dfe2e7" stroke-width="2.600"/><path d="M1467.500,848.500 v14 M1460.500,855.500 h14 M1462.500,850.500 l10,10 M1472.500,850.500 l-10,10" stroke="#dfe2e7" stroke-width="1.600"/><circle cx="1467.500" cy="855.500" r="1.800" fill="#2f3947"/>
<path d="M1502.500,848 v15 M1495,855.500 h15" stroke="#dfe2e7" stroke-width="1.800"/>
<rect x="1519" y="848.500" width="5.500" height="5.500" fill="none" stroke="#dfe2e7" stroke-width="1.100"/><circle cx="1529.500" cy="856.500" r="2.800" fill="none" stroke="#dfe2e7" stroke-width="1.100"/><path d="M1520,862.500 l3,-5 l3,5 z" fill="none" stroke="#dfe2e7" stroke-width="1.100"/>
<path d="M1540.500,849 h8 v8 h-8 z" fill="#4b8fd6"/><path d="M1541,858 h7 v4 h-7 z" fill="#f0b54a"/><path d="M1545,858 l2.500,3 l5,-6" fill="none" stroke="#5cc35a" stroke-width="1.800"/>
<rect x="1561" y="850" width="13" height="10.500" fill="none" stroke="#dfe2e7" stroke-width="1.300"/><path d="M1564,857.500 l3,-3 M1571,853 l-3,3" stroke="#dfe2e7" stroke-width="1.200"/>
<path d="M1582,850 h13 M1582,855.500 h13 M1582,861 h13" stroke="#dfe2e7" stroke-width="2"/>
</svg>
<div class="t " style="left:1431px;top:847px;font-size:10.5px;color:#e6e8ec;letter-spacing:-0.97px;">1:1</div>
<div class="r" style="left:0px;top:866.3px;width:1600px;height:33.7px;background:linear-gradient(90deg,#e9e3e4 0%,#ece6e6 40%,#e8e1e1 100%);"></div>
<div class="r" style="left:41.3px;top:867.5px;width:237.5px;height:32.5px;background:#ffffff;"></div>
<div class="r" style="left:568px;top:866.3px;width:38.5px;height:33.7px;background:#f6f2f2;"></div>
<div class="r" style="left:366px;top:897.5px;width:34px;height:2.5px;background:#1c7fd6;"></div>
<div class="r" style="left:407px;top:897.5px;width:34px;height:2.5px;background:#1c7fd6;"></div>
<div class="r" style="left:568px;top:897.5px;width:38.5px;height:2.5px;background:#1c7fd6;"></div>
<div class="t " style="left:73.7px;top:876px;font-size:14px;color:#2b2b2b;letter-spacing:-0.93px;">Ara</div>
<svg class="ico" style="left:0;top:866px" width="1600" height="34" viewBox="0 866 1600 34">
<path d="M13,878.800 l5.800,-0.800 v5.500 h-5.800 z M19.700,877.800 l7.300,-1 v6.700 h-7.300 z M13,884.400 h5.800 v5.500 l-5.800,-0.800 z M19.700,884.400 h7.300 v6.700 l-7.300,-1 z" fill="#1b1b1b"/>
<circle cx="58.700" cy="881" r="4.600" fill="none" stroke="#1b1b1b" stroke-width="1.300"/><path d="M55.500,884.500 l-5.500,5.500" stroke="#1b1b1b" stroke-width="1.400"/>
<rect x="294.500" y="878.500" width="8" height="9" fill="none" stroke="#1b1b1b" stroke-width="1.300"/><path d="M293,876 h10.500 M293,890.500 h10.500 M305.500,878.500 v9" stroke="#1b1b1b" stroke-width="1.300"/><rect x="304.700" y="876.500" width="1.800" height="1.800" fill="#1b1b1b"/>
<circle cx="342.500" cy="883" r="10" fill="#1b9de2"/><path d="M333,885 a9.500,9.500 0 0 1 18.500,-4 c0.500,3.500 -2,5 -5.500,4.500 c1.500,-1.500 1,-4.500 -2.500,-5 c-4,-0.500 -7,2 -6.500,6.500 c0.300,3 2.500,5 5.500,5.800 a10,10 0 0 1 -9.500,-7.800 z" fill="#37d399"/><path d="M337,887 c-0.500,-4.500 2.500,-7 6.500,-6.500 c3.500,0.500 4,3.500 2.500,5 c-2,-0.300 -3,-1 -2.800,-2.500 c-2.200,0.500 -3,3 -1.200,5.500 c1.800,2.300 5.500,2.300 8,0.500 c-2,3.500 -6,4.800 -9,3.300 c-2.300,-1.200 -3.700,-3 -4,-5.300 z" fill="#0c59a4"/>
<path d="M373.500,874.500 h7 l2,2.500 h11 v4 h-20 z" fill="#e9a825"/><rect x="373.500" y="878" width="20.500" height="13.500" rx="1" fill="#fbd35a"/><path d="M378,891.500 v-5.500 h11.500 v5.500 h-3 v-3 h-5.500 v3 z" fill="#3d8fd8"/>
<circle cx="424" cy="883" r="10" fill="#fff"/><path d="M424,883 L415.340,878 A10,10 0 0 1 432.660,878 Z" fill="#e33b2e"/><path d="M424,883 L432.660,878 A10,10 0 0 1 424,893 Z" fill="#f7c21b"/><path d="M424,883 L424,893 A10,10 0 0 1 415.340,878 Z" fill="#2ba24c"/><circle cx="424" cy="883" r="4.600" fill="#fff"/><circle cx="424" cy="883" r="3.600" fill="#3a7ff0"/><circle cx="430" cy="889.500" r="5" fill="#d8d8d8" stroke="#fff" stroke-width="0.800"/><circle cx="430" cy="888" r="1.800" fill="#888"/><path d="M426.500,893 a3.500,3 0 0 1 7,0" fill="#888"/>
<rect x="455" y="875.500" width="21" height="15" rx="1" fill="#1a74d0"/><path d="M455,876.500 l10.500,8 l10.500,-8" fill="#5db2f4"/><path d="M455,890 l8,-7 M476,890 l-8,-7" stroke="#0e57a8" stroke-width="1"/>
<circle cx="505.500" cy="883" r="10" fill="#12284b"/><circle cx="509.500" cy="879.500" r="3.500" fill="none" stroke="#fff" stroke-width="1.500"/><circle cx="501.500" cy="887" r="2.700" fill="none" stroke="#fff" stroke-width="1.300"/><path d="M496,883.500 l5.500,2.500 M503.500,885.500 l4,-3.500" stroke="#fff" stroke-width="1.800"/>
<path d="M546,873.500 l8,4.600 v9.500 l-8,4.600 l-8,-4.600 v-9.500 z" fill="#7b83eb"/><path d="M546,873.500 l8,4.600 l-8,4.900 z" fill="#c257d9"/><path d="M546,892.200 l-8,-4.600 l8,-4.600 z" fill="#3aa0f3"/><circle cx="546" cy="883" r="3.600" fill="#f3f0fa"/>
<path d="M578.500,892 L585,874 L589.500,874 L596,892 L591.500,892 L590,887.500 L584.200,889 L583,892 Z M585.500,885.200 L589,884.200 L587.300,878.800 Z" fill="#d8232a" fill-rule="evenodd"/><path d="M578.500,892 L583,892 L584.200,889 L590,887.500 L589,884.200 L585.500,885.200 Z" fill="#9c1218"/>
<circle cx="1244.500" cy="878.500" r="4.500" fill="#f4b63a"/><path d="M1241.500,872 l1,1.800 M1238.500,875.500 l1.800,0.800" stroke="#f4b63a" stroke-width="1.200"/><path d="M1243,891 a4.200,4.200 0 0 1 0.500,-8.300 a5.500,5.500 0 0 1 10.300,-0.500 a4.500,4.500 0 0 1 1,8.800 z" fill="#cfd6de" stroke="#a9b4c0" stroke-width="0.600"/>
<path d="M1375.500,886.500 l5,-5 l5,5" fill="none" stroke="#1b1b1b" stroke-width="1.400"/>
<rect x="1397.500" y="877.500" width="6" height="10" rx="1.500" fill="none" stroke="#1b1b1b" stroke-width="1.200"/><path d="M1395,876 a8,8 0 0 0 0,13 M1406,878.500 h2.500 v6 h-2.500" fill="none" stroke="#1b1b1b" stroke-width="1"/>
<path d="M1415,889.500 a10,10 0 0 1 10,-10 M1418.500,889.500 a6.500,6.500 0 0 1 6.500,-6.500 M1422,889.500 a3,3 0 0 1 3,-3" fill="none" stroke="#1b1b1b" stroke-width="1.300"/><circle cx="1425" cy="889.500" r="1.100" fill="#1b1b1b"/>
<rect x="1436" y="879.500" width="11.500" height="7.500" fill="#1b1b1b"/><path d="M1448,881.500 v3.500" stroke="#1b1b1b" stroke-width="1.500"/><path d="M1434,877 l3,3 M1437.500,876 v3.500" stroke="#1b1b1b" stroke-width="1.200"/>
<path d="M1455.500,881 h2.500 l3.500,-3 v10.500 l-3.500,-3 h-2.500 z" fill="none" stroke="#1b1b1b" stroke-width="1.100"/><path d="M1463.500,880 a4.500,4.500 0 0 1 0,6.500 M1465.500,877.500 a8,8 0 0 1 0,11.500" fill="none" stroke="#1b1b1b" stroke-width="0.900"/>
<path d="M1565,875.500 h14 v10.500 h-9 l-3,3 v-3 h-2 z" fill="#1b1b1b"/><path d="M1567.500,878.500 h9 M1567.500,881 h9 M1567.500,883.500 h6" stroke="#e9e3e4" stroke-width="0.900"/><circle cx="1579.500" cy="889" r="4.800" fill="#e9e3e4" stroke="#1b1b1b" stroke-width="1"/><text x="1579.500" y="892.300" font-size="8.500" text-anchor="middle" fill="#1b1b1b" style="font-family:'Liberation Sans',sans-serif">1</text>
<path d="M1597.500,866 v34" stroke="#b9b2b3" stroke-width="1"/>
</svg>
<div class="t " style="left:1266px;top:875.7px;font-size:12px;color:#1f1f1f;letter-spacing:-0.53px;">-2°C</div>
<div class="t " style="left:1296px;top:875.7px;font-size:12px;color:#1f1f1f;letter-spacing:-0.09px;">Çok bulutlu</div>
<div class="t " style="left:1476.5px;top:875.7px;font-size:11px;color:#1f1f1f;letter-spacing:-1.54px;">TUR</div>
<div class="t " style="left:1516px;top:867.3px;font-size:11px;color:#1f1f1f;letter-spacing:-0.91px;">21:39</div>
<div class="t " style="left:1505px;top:882.8px;font-size:11px;color:#1f1f1f;letter-spacing:-0.91px;">28.01.2024</div>
</div></body></html>
